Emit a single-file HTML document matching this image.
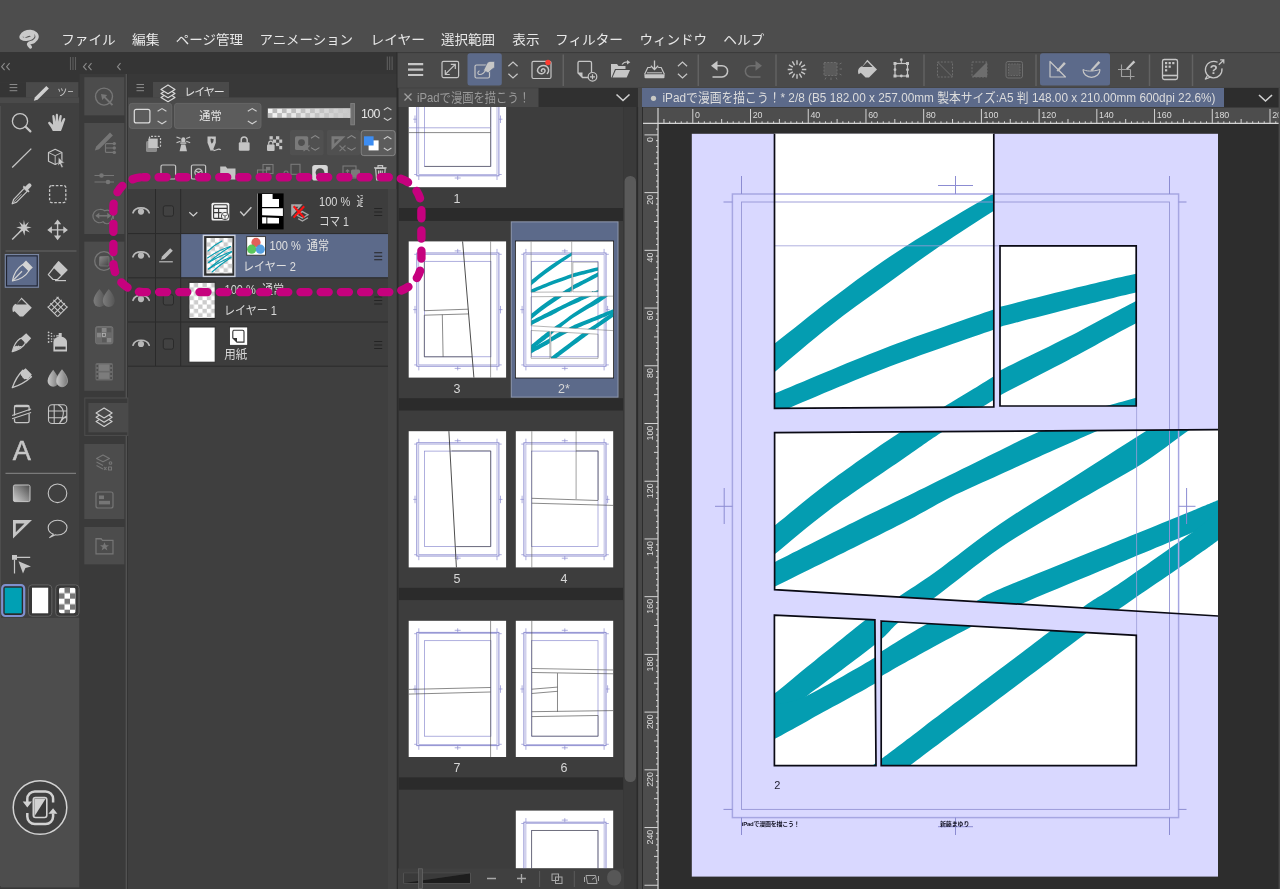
<!DOCTYPE html>
<html lang="ja"><head><meta charset="utf-8"><title>CLIP STUDIO PAINT</title>
<style>html,body{margin:0;padding:0;background:#4d4d4d;overflow:hidden}svg{display:block;will-change:transform}text{font-family:"Liberation Sans","Noto Sans CJK JP",sans-serif}</style>
</head><body>
<svg width="1280" height="889" viewBox="0 0 1280 889">
<rect x="0" y="0" width="1280" height="889" fill="#4d4d4d" />
<rect x="0" y="52" width="397" height="837" fill="#353535" />
<rect x="0" y="74" width="79.5" height="815" fill="#404040" />
<rect x="0" y="74" width="80" height="8.2" fill="#353535" />
<rect x="0" y="82.2" width="26" height="15.2" fill="#353535" />
<rect x="26" y="82.2" width="52.5" height="15.2" fill="#4a4a4a" />
<rect x="78.5" y="82.2" width="1.5" height="15.2" fill="#353535" />
<rect x="0" y="97.4" width="79" height="5.6" fill="#4a4a4a" />
<rect x="0" y="106" width="1" height="780" fill="#4d4d4d" />
<rect x="1" y="618" width="78.5" height="269.6" fill="#4d4d4d" />
<rect x="0" y="887.6" width="79.5" height="1.4" fill="#383838" />
<rect x="79.5" y="74" width="46.5" height="815" fill="#3a3a3a" />
<rect x="125.6" y="74" width="1.6" height="815" fill="#525252" />
<rect x="127.2" y="74" width="1" height="815" fill="#333" />
<rect x="128" y="74" width="268.6" height="815" fill="#3f3f3f" />
<rect x="128" y="74" width="268.6" height="8" fill="#383838" />
<rect x="128" y="82" width="25" height="15.5" fill="#383838" />
<rect x="153" y="82" width="76" height="15.5" fill="#4a4a4a" />
<rect x="229" y="82" width="167.6" height="15.5" fill="#383838" />
<rect x="128" y="97.5" width="268.6" height="91.5" fill="#4a4a4a" />
<rect x="396.6" y="52" width="2" height="837" fill="#2c2c2c" />
<rect x="398.6" y="52" width="241.4" height="837" fill="#4a4a4a" />
<rect x="398.6" y="88" width="241.4" height="801" fill="#2b2b2b" />
<rect x="640" y="88" width="640" height="801" fill="#2d2d2d" />
<rect x="640" y="88" width="640" height="19" fill="#2d2d2d" />
<rect x="638" y="88" width="4" height="801" fill="#484848" />
<rect x="642" y="88" width="582" height="19" fill="#5c6a8a" />
<circle cx="653.5" cy="98.3" r="2.6" fill="#c9c9c4"/>
<text x="662.5" y="102" font-size="12.6" fill="#dcdcdc" text-anchor="start" textLength="553" lengthAdjust="spacingAndGlyphs">iPadで漫画を描こう！* 2/8 (B5 182.00 x 257.00mm 製本サイズ:A5 判 148.00 x 210.00mm 600dpi 22.6%)</text>
<path d="M1259,95 l6.5,6 l6.5,-6" fill="none" stroke="#d0d0d0" stroke-width="1.6"/>
<rect x="642" y="107" width="638" height="782" fill="#2d2d2d" />
<rect x="691.8" y="133.8" width="526.2" height="742.8" fill="#d9d8ff" />
<defs><clipPath id="pageclip"><rect x="691.8" y="133.8" width="526.2" height="742.8"/></clipPath>
<clipPath id="panelclip"><path d="M774.5,120 L993.8,120 L993.8,406.8 L774.5,408.3Z M1000,245.8 L1136.2,245.8 L1136.2,406 L1000,406Z M774.6,432.7 L1240,429.5 L1240,617.3 L774.6,589.6Z M774.4,615.1 L874.9,619.9 L876,765.6 L774.4,765.6Z M881.2,621 L1136.3,635.3 L1136.3,765.6 L881.2,765.6Z"/></clipPath></defs>
<g clip-path="url(#pageclip)">
<path d="M774.5,120 L993.8,120 L993.8,406.8 L774.5,408.3Z" fill="#ffffff"/>
<path d="M1000,245.8 L1136.2,245.8 L1136.2,406 L1000,406Z" fill="#ffffff"/>
<path d="M774.6,432.7 L1240,429.5 L1240,617.3 L774.6,589.6Z" fill="#ffffff"/>
<path d="M774.4,615.1 L874.9,619.9 L876,765.6 L774.4,765.6Z" fill="#ffffff"/>
<path d="M881.2,621 L1136.3,635.3 L1136.3,765.6 L881.2,765.6Z" fill="#ffffff"/>
<g clip-path="url(#panelclip)" fill="#049db1" stroke="none">
<path d="M745.0,366.0 C750.0,362.2 760.8,354.3 775.0,343.3 C789.2,332.3 811.9,313.7 830.0,300.0 C848.1,286.3 865.1,273.5 883.4,261.0 C901.7,248.5 921.6,236.2 940.0,225.0 C958.4,213.8 981.0,200.8 993.5,193.5 C1006.0,186.2 1011.4,183.1 1015.0,181.0 L1015.0,198.0 C1011.4,200.2 1006.0,203.0 993.5,211.0 C981.0,219.0 958.4,233.4 940.0,246.0 C921.6,258.6 901.7,273.3 883.4,286.6 C865.1,299.9 848.1,311.8 830.0,326.0 C811.9,340.2 789.2,359.9 775.0,371.7 C760.8,383.5 750.0,392.8 745.0,397.0Z"/>
<path d="M745.0,405.0 C750.0,403.1 751.9,402.7 775.0,393.3 C798.1,383.9 847.0,362.6 883.4,348.7 C919.8,334.8 974.1,316.6 993.5,309.6 C1012.9,302.6 987.6,310.1 1000.0,306.8 C1012.4,303.5 1045.3,295.2 1068.0,289.7 C1090.7,284.2 1119.8,277.1 1136.0,273.7 C1152.2,270.2 1160.2,269.8 1165.0,269.0 L1165.0,287.0 C1160.2,287.9 1152.2,288.9 1136.0,292.6 C1119.8,296.3 1090.7,303.6 1068.0,309.3 C1045.3,315.0 1012.4,323.5 1000.0,326.9 C987.6,330.3 1012.9,322.8 993.5,329.8 C974.1,336.8 919.8,355.0 883.4,369.0 C847.0,383.0 798.1,404.2 775.0,414.0 C751.9,423.8 750.0,425.7 745.0,428.0Z"/>
<path d="M750.0,545.0 C754.2,541.7 761.7,535.9 775.0,525.3 C788.3,514.7 809.2,496.8 830.0,481.3 C850.8,465.8 881.1,444.6 899.7,432.4 C918.3,420.2 925.8,417.6 941.4,408.3 C957.0,399.0 983.7,382.8 993.5,376.5 C1003.3,370.2 987.6,377.2 1000.0,370.6 C1012.4,364.0 1045.3,348.7 1068.0,337.1 C1090.7,325.5 1119.8,309.1 1136.0,300.9 C1152.2,292.7 1160.2,290.1 1165.0,288.0 L1165.0,310.0 C1160.2,312.2 1152.2,314.9 1136.0,323.3 C1119.8,331.7 1090.7,348.2 1068.0,360.2 C1045.3,372.2 1012.4,388.8 1000.0,395.4 C987.6,402.0 1003.3,393.8 993.5,400.0 C983.7,406.2 957.0,422.2 941.4,432.4 C925.8,442.6 918.3,448.4 899.7,461.2 C881.1,474.0 850.8,493.9 830.0,509.4 C809.2,524.9 788.3,543.1 775.0,554.0 C761.7,564.9 754.2,571.5 750.0,575.0Z"/>
<path d="M750.0,574.0 C754.2,572.0 757.0,570.9 775.0,561.9 C793.0,552.9 835.8,531.1 858.1,520.0 C880.4,508.9 893.4,503.0 908.7,495.5 C924.0,488.0 934.8,482.6 950.0,475.1 C965.2,467.6 985.0,457.8 1000.0,450.5 C1015.0,443.2 1023.7,438.5 1039.7,431.6 C1055.7,424.7 1084.3,413.4 1096.0,409.0 C1107.7,404.6 1103.3,406.9 1110.0,405.0 C1116.7,403.1 1126.8,400.4 1136.0,397.7 C1145.2,395.0 1160.2,390.4 1165.0,389.0 L1165.0,403.0 C1160.2,405.1 1145.2,411.7 1136.0,415.5 C1126.8,419.3 1116.7,423.3 1110.0,426.0 C1103.3,428.7 1107.7,426.5 1096.0,431.6 C1084.3,436.7 1055.7,449.4 1039.7,456.5 C1023.7,463.6 1015.0,467.7 1000.0,474.5 C985.0,481.3 965.2,489.9 950.0,497.5 C934.8,505.1 924.0,512.0 908.7,520.0 C893.4,528.0 880.4,534.4 858.1,545.5 C835.8,556.6 793.0,577.7 775.0,586.6 C757.0,595.5 754.2,596.9 750.0,599.0Z"/>
<path d="M750.0,708.0 C754.1,705.6 764.8,700.4 774.4,693.5 C784.0,686.6 790.7,680.0 807.5,666.5 C824.3,653.0 859.6,624.1 875.0,612.4 C890.4,600.6 889.6,602.7 899.7,596.0 C909.8,589.3 918.7,584.0 935.4,572.0 C952.1,560.0 977.4,539.5 1000.0,524.0 C1022.6,508.5 1047.3,494.1 1070.9,479.0 C1094.5,463.9 1122.7,445.5 1141.7,433.7 C1160.7,421.9 1174.5,414.3 1185.0,408.0 C1195.5,401.7 1201.7,398.0 1205.0,396.0 L1205.0,421.0 C1201.7,423.0 1195.5,425.8 1185.0,433.0 C1174.5,440.2 1160.7,452.0 1141.7,464.0 C1122.7,476.0 1094.5,491.0 1070.9,505.0 C1047.3,519.0 1022.6,532.7 1000.0,548.0 C977.4,563.3 952.1,584.8 935.4,597.0 C918.7,609.2 909.8,613.6 899.7,621.5 C889.6,629.4 890.4,632.3 875.0,644.6 C859.6,656.9 824.3,683.2 807.5,695.4 C790.7,707.6 784.0,711.4 774.4,718.0 C764.8,724.6 754.1,732.2 750.0,735.0Z"/>
<path d="M750.0,712.0 C754.1,710.8 764.8,707.8 774.4,705.0 C784.0,702.2 790.7,703.3 807.5,695.4 C824.3,687.5 862.7,664.9 875.0,657.6 C887.3,650.3 872.4,657.4 881.2,651.7 C890.0,646.0 912.7,631.6 928.0,623.5 C943.3,615.4 960.9,608.8 972.9,603.0 C984.9,597.2 978.8,598.1 1000.0,589.0 C1021.2,579.9 1068.1,561.3 1100.0,548.3 C1131.9,535.3 1171.8,519.2 1191.4,511.2 C1211.0,503.2 1208.9,504.0 1217.8,500.3 C1226.7,496.6 1240.5,490.9 1245.0,489.0 L1245.0,511.0 C1240.5,512.8 1226.7,518.3 1217.8,522.0 C1208.9,525.7 1211.0,524.8 1191.4,533.0 C1171.8,541.2 1131.9,557.8 1100.0,571.1 C1068.1,584.4 1021.2,603.9 1000.0,613.0 C978.8,622.1 984.9,619.8 972.9,626.0 C960.9,632.2 943.3,641.6 928.0,650.0 C912.7,658.4 890.0,670.9 881.2,676.5 C872.4,682.1 887.3,676.2 875.0,683.6 C862.7,691.0 824.3,711.6 807.5,720.9 C790.7,730.1 784.0,733.9 774.4,739.1 C764.8,744.3 754.1,749.9 750.0,752.0Z"/>
<path d="M860.0,775.0 C863.5,772.4 871.2,766.6 881.2,759.1 C891.2,751.6 900.2,744.7 920.0,729.7 C939.8,714.7 978.0,685.7 1000.0,669.1 C1022.0,652.5 1037.4,640.6 1051.7,629.9 C1066.0,619.2 1074.5,612.9 1086.0,605.0 C1097.5,597.1 1102.9,594.8 1120.5,582.8 C1138.1,570.8 1175.2,544.8 1191.4,533.0 C1207.6,521.2 1208.9,518.8 1217.8,512.0 C1226.7,505.2 1240.5,495.3 1245.0,492.0 L1245.0,520.0 C1240.5,523.4 1226.7,533.9 1217.8,540.5 C1208.9,547.1 1207.6,548.1 1191.4,559.4 C1175.2,570.6 1138.1,595.6 1120.5,608.0 C1102.9,620.4 1097.5,625.0 1086.0,633.5 C1074.5,642.0 1066.0,648.5 1051.7,659.2 C1037.4,670.0 1022.0,681.5 1000.0,698.0 C978.0,714.5 939.8,743.1 920.0,758.0 C900.2,772.9 891.2,779.6 881.2,787.1 C871.2,794.6 863.5,800.4 860.0,803.0Z"/>
</g>
<g fill="none" stroke="#8c8cd2" stroke-width="1">
<path d="M774.5,245.8 H1136.6 V766 " stroke-width="0.8" stroke="#9c9cd8"/>
<rect x="741.5" y="202" width="428" height="607.4" stroke="#9696d6" stroke-width="0.9"/>
<rect x="732.4" y="194" width="446.2" height="623.6" stroke-width="1.5" stroke="#a6a6e2"/>
<path d="M741.5,176 V194 M723.5,202 H732.4 M1169.5,176 V194 M1178.6,202 H1186.5 M741.5,817.6 V835 M723.5,809.4 H732.4 M1169.5,817.6 V835 M1178.6,809.4 H1186.5"/>
<path d="M955.5,176 V194 M938,185.5 H973 M955.5,817.6 V835 M938,826.7 H973 M724.2,488 V524 M715,506.3 H732.4 M1186.6,488 V524 M1178.6,506.3 H1195.5"/>
</g>
<g fill="none" stroke="#0a0a14" stroke-width="1.7" stroke-linejoin="miter">
<path d="M774.5,120 L993.8,120 L993.8,406.8 L774.5,408.3Z"/>
<path d="M1000,245.8 L1136.2,245.8 L1136.2,406 L1000,406Z"/>
<path d="M774.6,432.7 L1240,429.5 L1240,617.3 L774.6,589.6Z"/>
<path d="M774.4,615.1 L874.9,619.9 L876,765.6 L774.4,765.6Z"/>
<path d="M881.2,621 L1136.3,635.3 L1136.3,765.6 L881.2,765.6Z"/>
</g>
<text x="774.3" y="789.3" font-size="11" fill="#222233" text-anchor="start" >2</text>
<text x="741.8" y="825.7" font-size="6" fill="#111122" text-anchor="start" font-weight="bold" textLength="58">iPadで漫画を描こう！</text>
<text x="940" y="825.7" font-size="6" fill="#111122" text-anchor="start" font-weight="bold" textLength="29.5">新藤まゆり</text>
</g>
<rect x="643" y="107.5" width="637" height="16.5" fill="#4d4d4d" />
<rect x="643" y="107.5" width="15.5" height="781.5" fill="#4d4d4d" />
<path d="M663.94,119V123.5M669.71,121.3V123.5M675.48,121.3V123.5M681.26,121.3V123.5M687.03,121.3V123.5M692.80,109V123.5M698.57,121.3V123.5M704.34,121.3V123.5M710.12,121.3V123.5M715.89,121.3V123.5M721.66,119V123.5M727.43,121.3V123.5M733.20,121.3V123.5M738.98,121.3V123.5M744.75,121.3V123.5M750.52,109V123.5M756.29,121.3V123.5M762.06,121.3V123.5M767.84,121.3V123.5M773.61,121.3V123.5M779.38,119V123.5M785.15,121.3V123.5M790.92,121.3V123.5M796.70,121.3V123.5M802.47,121.3V123.5M808.24,109V123.5M814.01,121.3V123.5M819.78,121.3V123.5M825.56,121.3V123.5M831.33,121.3V123.5M837.10,119V123.5M842.87,121.3V123.5M848.64,121.3V123.5M854.42,121.3V123.5M860.19,121.3V123.5M865.96,109V123.5M871.73,121.3V123.5M877.50,121.3V123.5M883.28,121.3V123.5M889.05,121.3V123.5M894.82,119V123.5M900.59,121.3V123.5M906.36,121.3V123.5M912.14,121.3V123.5M917.91,121.3V123.5M923.68,109V123.5M929.45,121.3V123.5M935.22,121.3V123.5M941.00,121.3V123.5M946.77,121.3V123.5M952.54,119V123.5M958.31,121.3V123.5M964.08,121.3V123.5M969.86,121.3V123.5M975.63,121.3V123.5M981.40,109V123.5M987.17,121.3V123.5M992.94,121.3V123.5M998.72,121.3V123.5M1004.49,121.3V123.5M1010.26,119V123.5M1016.03,121.3V123.5M1021.80,121.3V123.5M1027.58,121.3V123.5M1033.35,121.3V123.5M1039.12,109V123.5M1044.89,121.3V123.5M1050.66,121.3V123.5M1056.44,121.3V123.5M1062.21,121.3V123.5M1067.98,119V123.5M1073.75,121.3V123.5M1079.52,121.3V123.5M1085.30,121.3V123.5M1091.07,121.3V123.5M1096.84,109V123.5M1102.61,121.3V123.5M1108.38,121.3V123.5M1114.16,121.3V123.5M1119.93,121.3V123.5M1125.70,119V123.5M1131.47,121.3V123.5M1137.24,121.3V123.5M1143.02,121.3V123.5M1148.79,121.3V123.5M1154.56,109V123.5M1160.33,121.3V123.5M1166.10,121.3V123.5M1171.88,121.3V123.5M1177.65,121.3V123.5M1183.42,119V123.5M1189.19,121.3V123.5M1194.96,121.3V123.5M1200.74,121.3V123.5M1206.51,121.3V123.5M1212.28,109V123.5M1218.05,121.3V123.5M1223.82,121.3V123.5M1229.60,121.3V123.5M1235.37,121.3V123.5M1241.14,119V123.5M1246.91,121.3V123.5M1252.68,121.3V123.5M1258.46,121.3V123.5M1264.23,121.3V123.5M1270.00,109V123.5M1275.77,121.3V123.5" stroke="#d4d4d4" stroke-width="1" fill="none"/>
<line x1="643" y1="123.3" x2="1280" y2="123.3" stroke="#d4d4d4" stroke-width="1.2" />
<line x1="658" y1="108" x2="658" y2="889" stroke="#d4d4d4" stroke-width="1.2" />
<text x="695.0" y="118" font-size="8.9" fill="#dadada" text-anchor="start" >0</text>
<text x="752.7" y="118" font-size="8.9" fill="#dadada" text-anchor="start" >20</text>
<text x="810.4" y="118" font-size="8.9" fill="#dadada" text-anchor="start" >40</text>
<text x="868.2" y="118" font-size="8.9" fill="#dadada" text-anchor="start" >60</text>
<text x="925.9" y="118" font-size="8.9" fill="#dadada" text-anchor="start" >80</text>
<text x="983.6" y="118" font-size="8.9" fill="#dadada" text-anchor="start" >100</text>
<text x="1041.3" y="118" font-size="8.9" fill="#dadada" text-anchor="start" >120</text>
<text x="1099.0" y="118" font-size="8.9" fill="#dadada" text-anchor="start" >140</text>
<text x="1156.8" y="118" font-size="8.9" fill="#dadada" text-anchor="start" >160</text>
<text x="1214.5" y="118" font-size="8.9" fill="#dadada" text-anchor="start" >180</text>
<text x="1272.2" y="118" font-size="8.9" fill="#dadada" text-anchor="start" >200</text>
<path d="M656,129.13H658M644.5,134.90H658M656,140.67H658M656,146.44H658M656,152.22H658M656,157.99H658M654,163.76H658M656,169.53H658M656,175.30H658M656,181.08H658M656,186.85H658M644.5,192.62H658M656,198.39H658M656,204.16H658M656,209.94H658M656,215.71H658M654,221.48H658M656,227.25H658M656,233.02H658M656,238.80H658M656,244.57H658M644.5,250.34H658M656,256.11H658M656,261.88H658M656,267.66H658M656,273.43H658M654,279.20H658M656,284.97H658M656,290.74H658M656,296.52H658M656,302.29H658M644.5,308.06H658M656,313.83H658M656,319.60H658M656,325.38H658M656,331.15H658M654,336.92H658M656,342.69H658M656,348.46H658M656,354.24H658M656,360.01H658M644.5,365.78H658M656,371.55H658M656,377.32H658M656,383.10H658M656,388.87H658M654,394.64H658M656,400.41H658M656,406.18H658M656,411.96H658M656,417.73H658M644.5,423.50H658M656,429.27H658M656,435.04H658M656,440.82H658M656,446.59H658M654,452.36H658M656,458.13H658M656,463.90H658M656,469.68H658M656,475.45H658M644.5,481.22H658M656,486.99H658M656,492.76H658M656,498.54H658M656,504.31H658M654,510.08H658M656,515.85H658M656,521.62H658M656,527.40H658M656,533.17H658M644.5,538.94H658M656,544.71H658M656,550.48H658M656,556.26H658M656,562.03H658M654,567.80H658M656,573.57H658M656,579.34H658M656,585.12H658M656,590.89H658M644.5,596.66H658M656,602.43H658M656,608.20H658M656,613.98H658M656,619.75H658M654,625.52H658M656,631.29H658M656,637.06H658M656,642.84H658M656,648.61H658M644.5,654.38H658M656,660.15H658M656,665.92H658M656,671.70H658M656,677.47H658M654,683.24H658M656,689.01H658M656,694.78H658M656,700.56H658M656,706.33H658M644.5,712.10H658M656,717.87H658M656,723.64H658M656,729.42H658M656,735.19H658M654,740.96H658M656,746.73H658M656,752.50H658M656,758.28H658M656,764.05H658M644.5,769.82H658M656,775.59H658M656,781.36H658M656,787.14H658M656,792.91H658M654,798.68H658M656,804.45H658M656,810.22H658M656,816.00H658M656,821.77H658M644.5,827.54H658M656,833.31H658M656,839.08H658M656,844.86H658M656,850.63H658M654,856.40H658M656,862.17H658M656,867.94H658M656,873.72H658M656,879.49H658M644.5,885.26H658" stroke="#d4d4d4" stroke-width="1" fill="none"/>
<text transform="translate(653.2,137.1) rotate(-90)" font-size="8.9" fill="#dadada" text-anchor="end">0</text>
<text transform="translate(653.2,194.8) rotate(-90)" font-size="8.9" fill="#dadada" text-anchor="end">20</text>
<text transform="translate(653.2,252.5) rotate(-90)" font-size="8.9" fill="#dadada" text-anchor="end">40</text>
<text transform="translate(653.2,310.3) rotate(-90)" font-size="8.9" fill="#dadada" text-anchor="end">60</text>
<text transform="translate(653.2,368.0) rotate(-90)" font-size="8.9" fill="#dadada" text-anchor="end">80</text>
<text transform="translate(653.2,425.7) rotate(-90)" font-size="8.9" fill="#dadada" text-anchor="end">100</text>
<text transform="translate(653.2,483.4) rotate(-90)" font-size="8.9" fill="#dadada" text-anchor="end">120</text>
<text transform="translate(653.2,541.1) rotate(-90)" font-size="8.9" fill="#dadada" text-anchor="end">140</text>
<text transform="translate(653.2,598.9) rotate(-90)" font-size="8.9" fill="#dadada" text-anchor="end">160</text>
<text transform="translate(653.2,656.6) rotate(-90)" font-size="8.9" fill="#dadada" text-anchor="end">180</text>
<text transform="translate(653.2,714.3) rotate(-90)" font-size="8.9" fill="#dadada" text-anchor="end">200</text>
<text transform="translate(653.2,772.0) rotate(-90)" font-size="8.9" fill="#dadada" text-anchor="end">220</text>
<text transform="translate(653.2,829.7) rotate(-90)" font-size="8.9" fill="#dadada" text-anchor="end">240</text>
<rect x="1278.6" y="88" width="1.4" height="801" fill="#484848" />
<rect x="398.6" y="87.8" width="239.4" height="19.2" fill="#303030" />
<line x1="398.6" y1="87.5" x2="1280" y2="87.5" stroke="#363636" stroke-width="1.2" />
<rect x="398.6" y="88.1" width="139.9" height="18.9" fill="#4a4a4a" />
<path d="M404.5,93.5 l7,7 M411.5,93.5 l-7,7" stroke="#a0a0a0" stroke-width="1.3" fill="none"/>
<text x="417" y="102" font-size="12.6" fill="#9a9a9a" text-anchor="start" textLength="113" lengthAdjust="spacingAndGlyphs">iPadで漫画を描こう！</text>
<path d="M616.5,94.5 l6.5,6 l6.5,-6" fill="none" stroke="#d0d0d0" stroke-width="1.6"/>
<rect x="398.6" y="107" width="239.4" height="782" fill="#2b2b2b" />
<rect x="398.8" y="107" width="224.4" height="101" fill="#3d3d3d" />
<rect x="398.8" y="220.9" width="224.4" height="177.3" fill="#3d3d3d" />
<rect x="398.8" y="410.5" width="224.4" height="177.3" fill="#3d3d3d" />
<rect x="398.8" y="600.1" width="224.4" height="177.3" fill="#3d3d3d" />
<rect x="398.8" y="789.6999999999999" width="224.4" height="177.3" fill="#3d3d3d" />
<rect x="623.2" y="107" width="15" height="782" fill="#3a3a3a" />
<rect x="624.600" y="176" width="11.400" height="606" rx="5.500" fill="#5a5a5a"/>
<rect x="636.5" y="107" width="1.5" height="782" fill="#2b2b2b" />
<defs><clipPath id="pmclip"><rect x="398" y="107" width="226" height="761.4"/></clipPath></defs>
<g clip-path="url(#pmclip)">
<rect x="408.7" y="51" width="97.4" height="136.2" fill="#ffffff" />
<g transform="translate(408.7,51)" fill="none" stroke="#8d8dd0" stroke-width="0.7">
<rect x="8.1" y="11.6" width="82.1" height="113.2" stroke-width="1"/>
<rect x="10.1" y="12.9" width="78.2" height="110.6" stroke-width="0.6"/>
<rect x="15.8" y="19.9" width="66.4" height="95.5" stroke-width="0.7"/>
<path d="M10.1,7.5V11.6 M88.3,7.5V11.6 M10.1,124.8V129 M88.3,124.8V129 M5.5,12.9H8.1 M90.2,12.9H93 M5.5,123.5H8.1 M90.2,123.5H93 M49,7.5V11.6 M46,9.5H52 M49,124.8V129 M46,127H52 M6.3,64.5V72 M4.5,68.2H8.1 M91.8,64.5V72 M90.2,68.2H93.8"/>
</g>
<g transform="translate(408.7,51)" fill="none" stroke="#222" stroke-width="0.7">
<path d="M0,81.6H81.9 M81.9,0V115.4 M15.8,115.4H81.9" stroke-width="0.65" stroke="#4a4a4a"/>
<path d="M0,76.8H81.9" stroke="#8d8dd0"/>
</g>
<rect x="408.7" y="241.4" width="97.4" height="136.2" fill="#ffffff" />
<g transform="translate(408.7,241.4)" fill="none" stroke="#8d8dd0" stroke-width="0.7">
<rect x="8.1" y="11.6" width="82.1" height="113.2" stroke-width="1"/>
<rect x="10.1" y="12.9" width="78.2" height="110.6" stroke-width="0.6"/>
<rect x="15.8" y="19.9" width="66.4" height="95.5" stroke-width="0.7"/>
<path d="M10.1,7.5V11.6 M88.3,7.5V11.6 M10.1,124.8V129 M88.3,124.8V129 M5.5,12.9H8.1 M90.2,12.9H93 M5.5,123.5H8.1 M90.2,123.5H93 M49,7.5V11.6 M46,9.5H52 M49,124.8V129 M46,127H52 M6.3,64.5V72 M4.5,68.2H8.1 M91.8,64.5V72 M90.2,68.2H93.8"/>
</g>
<g transform="translate(408.7,241.4)" fill="none" stroke="#222" stroke-width="0.7">
<path d="M81.9,0V136.2" stroke-width="0.55" stroke="#555"/>
<path d="M53.9,0L65.2,136.2" stroke-width="0.9" stroke="#3a3a3a"/>
<path d="M15.6,20.1V69.3L59.4,67.8 M15.6,73.8L60.3,72.5 M15.6,73.8V115.4H63.3 M33.6,73.3L34.4,115.4" stroke-width="0.65" stroke="#4a4a4a"/>
</g>
<rect x="511.3" y="221.9" width="106.7" height="175.2" fill="#5c6a8a" stroke="#8d97ad" stroke-width="1"/>
<rect x="515.0" y="240.6" width="99.0" height="137.79999999999998" fill="#111" />
<rect x="515.8" y="241.4" width="97.4" height="136.2" fill="#ffffff" />
<g transform="translate(515.8,241.4)" fill="none" stroke="#8d8dd0" stroke-width="0.7">
<rect x="8.1" y="11.6" width="82.1" height="113.2" stroke-width="1"/>
<rect x="10.1" y="12.9" width="78.2" height="110.6" stroke-width="0.6"/>
<rect x="15.8" y="19.9" width="66.4" height="95.5" stroke-width="0.7"/>
<path d="M10.1,7.5V11.6 M88.3,7.5V11.6 M10.1,124.8V129 M88.3,124.8V129 M5.5,12.9H8.1 M90.2,12.9H93 M5.5,123.5H8.1 M90.2,123.5H93 M49,7.5V11.6 M46,9.5H52 M49,124.8V129 M46,127H52 M6.3,64.5V72 M4.5,68.2H8.1 M91.8,64.5V72 M90.2,68.2H93.8"/>
</g>
<g transform="translate(515.8,241.4) scale(0.18510) translate(-691.8,-133.8)" clip-path="url(#pageclip)">
<g clip-path="url(#panelclip)" fill="#049db1" stroke="none">
<path d="M745.0,366.0 C750.0,362.2 760.8,354.3 775.0,343.3 C789.2,332.3 811.9,313.7 830.0,300.0 C848.1,286.3 865.1,273.5 883.4,261.0 C901.7,248.5 921.6,236.2 940.0,225.0 C958.4,213.8 981.0,200.8 993.5,193.5 C1006.0,186.2 1011.4,183.1 1015.0,181.0 L1015.0,198.0 C1011.4,200.2 1006.0,203.0 993.5,211.0 C981.0,219.0 958.4,233.4 940.0,246.0 C921.6,258.6 901.7,273.3 883.4,286.6 C865.1,299.9 848.1,311.8 830.0,326.0 C811.9,340.2 789.2,359.9 775.0,371.7 C760.8,383.5 750.0,392.8 745.0,397.0Z"/>
<path d="M745.0,405.0 C750.0,403.1 751.9,402.7 775.0,393.3 C798.1,383.9 847.0,362.6 883.4,348.7 C919.8,334.8 974.1,316.6 993.5,309.6 C1012.9,302.6 987.6,310.1 1000.0,306.8 C1012.4,303.5 1045.3,295.2 1068.0,289.7 C1090.7,284.2 1119.8,277.1 1136.0,273.7 C1152.2,270.2 1160.2,269.8 1165.0,269.0 L1165.0,287.0 C1160.2,287.9 1152.2,288.9 1136.0,292.6 C1119.8,296.3 1090.7,303.6 1068.0,309.3 C1045.3,315.0 1012.4,323.5 1000.0,326.9 C987.6,330.3 1012.9,322.8 993.5,329.8 C974.1,336.8 919.8,355.0 883.4,369.0 C847.0,383.0 798.1,404.2 775.0,414.0 C751.9,423.8 750.0,425.7 745.0,428.0Z"/>
<path d="M750.0,545.0 C754.2,541.7 761.7,535.9 775.0,525.3 C788.3,514.7 809.2,496.8 830.0,481.3 C850.8,465.8 881.1,444.6 899.7,432.4 C918.3,420.2 925.8,417.6 941.4,408.3 C957.0,399.0 983.7,382.8 993.5,376.5 C1003.3,370.2 987.6,377.2 1000.0,370.6 C1012.4,364.0 1045.3,348.7 1068.0,337.1 C1090.7,325.5 1119.8,309.1 1136.0,300.9 C1152.2,292.7 1160.2,290.1 1165.0,288.0 L1165.0,310.0 C1160.2,312.2 1152.2,314.9 1136.0,323.3 C1119.8,331.7 1090.7,348.2 1068.0,360.2 C1045.3,372.2 1012.4,388.8 1000.0,395.4 C987.6,402.0 1003.3,393.8 993.5,400.0 C983.7,406.2 957.0,422.2 941.4,432.4 C925.8,442.6 918.3,448.4 899.7,461.2 C881.1,474.0 850.8,493.9 830.0,509.4 C809.2,524.9 788.3,543.1 775.0,554.0 C761.7,564.9 754.2,571.5 750.0,575.0Z"/>
<path d="M750.0,574.0 C754.2,572.0 757.0,570.9 775.0,561.9 C793.0,552.9 835.8,531.1 858.1,520.0 C880.4,508.9 893.4,503.0 908.7,495.5 C924.0,488.0 934.8,482.6 950.0,475.1 C965.2,467.6 985.0,457.8 1000.0,450.5 C1015.0,443.2 1023.7,438.5 1039.7,431.6 C1055.7,424.7 1084.3,413.4 1096.0,409.0 C1107.7,404.6 1103.3,406.9 1110.0,405.0 C1116.7,403.1 1126.8,400.4 1136.0,397.7 C1145.2,395.0 1160.2,390.4 1165.0,389.0 L1165.0,403.0 C1160.2,405.1 1145.2,411.7 1136.0,415.5 C1126.8,419.3 1116.7,423.3 1110.0,426.0 C1103.3,428.7 1107.7,426.5 1096.0,431.6 C1084.3,436.7 1055.7,449.4 1039.7,456.5 C1023.7,463.6 1015.0,467.7 1000.0,474.5 C985.0,481.3 965.2,489.9 950.0,497.5 C934.8,505.1 924.0,512.0 908.7,520.0 C893.4,528.0 880.4,534.4 858.1,545.5 C835.8,556.6 793.0,577.7 775.0,586.6 C757.0,595.5 754.2,596.9 750.0,599.0Z"/>
<path d="M750.0,708.0 C754.1,705.6 764.8,700.4 774.4,693.5 C784.0,686.6 790.7,680.0 807.5,666.5 C824.3,653.0 859.6,624.1 875.0,612.4 C890.4,600.6 889.6,602.7 899.7,596.0 C909.8,589.3 918.7,584.0 935.4,572.0 C952.1,560.0 977.4,539.5 1000.0,524.0 C1022.6,508.5 1047.3,494.1 1070.9,479.0 C1094.5,463.9 1122.7,445.5 1141.7,433.7 C1160.7,421.9 1174.5,414.3 1185.0,408.0 C1195.5,401.7 1201.7,398.0 1205.0,396.0 L1205.0,421.0 C1201.7,423.0 1195.5,425.8 1185.0,433.0 C1174.5,440.2 1160.7,452.0 1141.7,464.0 C1122.7,476.0 1094.5,491.0 1070.9,505.0 C1047.3,519.0 1022.6,532.7 1000.0,548.0 C977.4,563.3 952.1,584.8 935.4,597.0 C918.7,609.2 909.8,613.6 899.7,621.5 C889.6,629.4 890.4,632.3 875.0,644.6 C859.6,656.9 824.3,683.2 807.5,695.4 C790.7,707.6 784.0,711.4 774.4,718.0 C764.8,724.6 754.1,732.2 750.0,735.0Z"/>
<path d="M750.0,712.0 C754.1,710.8 764.8,707.8 774.4,705.0 C784.0,702.2 790.7,703.3 807.5,695.4 C824.3,687.5 862.7,664.9 875.0,657.6 C887.3,650.3 872.4,657.4 881.2,651.7 C890.0,646.0 912.7,631.6 928.0,623.5 C943.3,615.4 960.9,608.8 972.9,603.0 C984.9,597.2 978.8,598.1 1000.0,589.0 C1021.2,579.9 1068.1,561.3 1100.0,548.3 C1131.9,535.3 1171.8,519.2 1191.4,511.2 C1211.0,503.2 1208.9,504.0 1217.8,500.3 C1226.7,496.6 1240.5,490.9 1245.0,489.0 L1245.0,511.0 C1240.5,512.8 1226.7,518.3 1217.8,522.0 C1208.9,525.7 1211.0,524.8 1191.4,533.0 C1171.8,541.2 1131.9,557.8 1100.0,571.1 C1068.1,584.4 1021.2,603.9 1000.0,613.0 C978.8,622.1 984.9,619.8 972.9,626.0 C960.9,632.2 943.3,641.6 928.0,650.0 C912.7,658.4 890.0,670.9 881.2,676.5 C872.4,682.1 887.3,676.2 875.0,683.6 C862.7,691.0 824.3,711.6 807.5,720.9 C790.7,730.1 784.0,733.9 774.4,739.1 C764.8,744.3 754.1,749.9 750.0,752.0Z"/>
<path d="M860.0,775.0 C863.5,772.4 871.2,766.6 881.2,759.1 C891.2,751.6 900.2,744.7 920.0,729.7 C939.8,714.7 978.0,685.7 1000.0,669.1 C1022.0,652.5 1037.4,640.6 1051.7,629.9 C1066.0,619.2 1074.5,612.9 1086.0,605.0 C1097.5,597.1 1102.9,594.8 1120.5,582.8 C1138.1,570.8 1175.2,544.8 1191.4,533.0 C1207.6,521.2 1208.9,518.8 1217.8,512.0 C1226.7,505.2 1240.5,495.3 1245.0,492.0 L1245.0,520.0 C1240.5,523.4 1226.7,533.9 1217.8,540.5 C1208.9,547.1 1207.6,548.1 1191.4,559.4 C1175.2,570.6 1138.1,595.6 1120.5,608.0 C1102.9,620.4 1097.5,625.0 1086.0,633.5 C1074.5,642.0 1066.0,648.5 1051.7,659.2 C1037.4,670.0 1022.0,681.5 1000.0,698.0 C978.0,714.5 939.8,743.1 920.0,758.0 C900.2,772.9 891.2,779.6 881.2,787.1 C871.2,794.6 863.5,800.4 860.0,803.0Z"/>
</g>
<g fill="none" stroke="#666" stroke-width="2.6">
<path d="M774.5,120 L993.8,120 L993.8,406.8 L774.5,408.3Z"/>
<path d="M1000,245.8 L1136.2,245.8 L1136.2,406 L1000,406Z"/>
<path d="M774.6,432.7 L1240,429.5 L1240,617.3 L774.6,589.6Z"/>
<path d="M774.4,615.1 L874.9,619.9 L876,765.6 L774.4,765.6Z"/>
<path d="M881.2,621 L1136.3,635.3 L1136.3,765.6 L881.2,765.6Z"/>
</g></g>
<rect x="408.7" y="431.2" width="97.4" height="136.2" fill="#ffffff" />
<g transform="translate(408.7,431.2)" fill="none" stroke="#8d8dd0" stroke-width="0.7">
<rect x="8.1" y="11.6" width="82.1" height="113.2" stroke-width="1"/>
<rect x="10.1" y="12.9" width="78.2" height="110.6" stroke-width="0.6"/>
<rect x="15.8" y="19.9" width="66.4" height="95.5" stroke-width="0.7"/>
<path d="M10.1,7.5V11.6 M88.3,7.5V11.6 M10.1,124.8V129 M88.3,124.8V129 M5.5,12.9H8.1 M90.2,12.9H93 M5.5,123.5H8.1 M90.2,123.5H93 M49,7.5V11.6 M46,9.5H52 M49,124.8V129 M46,127H52 M6.3,64.5V72 M4.5,68.2H8.1 M91.8,64.5V72 M90.2,68.2H93.8"/>
</g>
<g transform="translate(408.7,431.2)" fill="none" stroke="#222" stroke-width="0.7">
<path d="M40.2,0L47.7,136.2" stroke-width="0.9" stroke="#3a3a3a"/>
<path d="M42.8,19.7H81.9V115.4H47.5" stroke-width="0.65" stroke="#4a4a4a"/>
</g>
<rect x="515.8" y="431.2" width="97.4" height="136.2" fill="#ffffff" />
<g transform="translate(515.8,431.2)" fill="none" stroke="#8d8dd0" stroke-width="0.7">
<rect x="8.1" y="11.6" width="82.1" height="113.2" stroke-width="1"/>
<rect x="10.1" y="12.9" width="78.2" height="110.6" stroke-width="0.6"/>
<rect x="15.8" y="19.9" width="66.4" height="95.5" stroke-width="0.7"/>
<path d="M10.1,7.5V11.6 M88.3,7.5V11.6 M10.1,124.8V129 M88.3,124.8V129 M5.5,12.9H8.1 M90.2,12.9H93 M5.5,123.5H8.1 M90.2,123.5H93 M49,7.5V11.6 M46,9.5H52 M49,124.8V129 M46,127H52 M6.3,64.5V72 M4.5,68.2H8.1 M91.8,64.5V72 M90.2,68.2H93.8"/>
</g>
<g transform="translate(515.8,431.2)" fill="none" stroke="#222" stroke-width="0.7">
<path d="M16,0V136.2 M60.3,0V67.8" stroke-width="0.55" stroke="#555"/>
<path d="M60.3,19.7H82.3V68.8 M16,67.1L82.3,69.3 M16,72L97.4,74.2" stroke-width="0.65" stroke="#4a4a4a"/>
</g>
<rect x="408.7" y="620.8" width="97.4" height="136.2" fill="#ffffff" />
<g transform="translate(408.7,620.8)" fill="none" stroke="#8d8dd0" stroke-width="0.7">
<rect x="8.1" y="11.6" width="82.1" height="113.2" stroke-width="1"/>
<rect x="10.1" y="12.9" width="78.2" height="110.6" stroke-width="0.6"/>
<rect x="15.8" y="19.9" width="66.4" height="95.5" stroke-width="0.7"/>
<path d="M10.1,7.5V11.6 M88.3,7.5V11.6 M10.1,124.8V129 M88.3,124.8V129 M5.5,12.9H8.1 M90.2,12.9H93 M5.5,123.5H8.1 M90.2,123.5H93 M49,7.5V11.6 M46,9.5H52 M49,124.8V129 M46,127H52 M6.3,64.5V72 M4.5,68.2H8.1 M91.8,64.5V72 M90.2,68.2H93.8"/>
</g>
<g transform="translate(408.7,620.8)" fill="none" stroke="#222" stroke-width="0.7">
<path d="M81.9,0V136.2" stroke-width="0.6" stroke="#4a4a4a"/>
<path d="M0,68.6L81.9,66.7 M0,73.3L81.9,71.2" stroke-width="0.65" stroke="#4a4a4a"/>
</g>
<rect x="515.8" y="620.8" width="97.4" height="136.2" fill="#ffffff" />
<g transform="translate(515.8,620.8)" fill="none" stroke="#8d8dd0" stroke-width="0.7">
<rect x="8.1" y="11.6" width="82.1" height="113.2" stroke-width="1"/>
<rect x="10.1" y="12.9" width="78.2" height="110.6" stroke-width="0.6"/>
<rect x="15.8" y="19.9" width="66.4" height="95.5" stroke-width="0.7"/>
<path d="M10.1,7.5V11.6 M88.3,7.5V11.6 M10.1,124.8V129 M88.3,124.8V129 M5.5,12.9H8.1 M90.2,12.9H93 M5.5,123.5H8.1 M90.2,123.5H93 M49,7.5V11.6 M46,9.5H52 M49,124.8V129 M46,127H52 M6.3,64.5V72 M4.5,68.2H8.1 M91.8,64.5V72 M90.2,68.2H93.8"/>
</g>
<g transform="translate(515.8,620.8)" fill="none" stroke="#222" stroke-width="0.7">
<path d="M16,0V115.4H82.3V94.7" stroke-width="0.6" stroke="#4a4a4a"/>
<path d="M16,47.7L97.4,49.2" stroke-width="0.8" stroke="#777"/>
<path d="M16,51.7L97.4,53 M41.7,52.4V90.9 M16,68.4L41.7,66.3 M16,72.7L41.7,70.5 M16,90.9L97.4,89.8 M16,95.8L82.3,94.7" stroke-width="0.65" stroke="#4a4a4a"/>
</g>
<rect x="515.8" y="810.6" width="97.4" height="136.2" fill="#ffffff" />
<g transform="translate(515.8,810.6)" fill="none" stroke="#8d8dd0" stroke-width="0.7">
<rect x="8.1" y="11.6" width="82.1" height="113.2" stroke-width="1"/>
<rect x="10.1" y="12.9" width="78.2" height="110.6" stroke-width="0.6"/>
<rect x="15.8" y="19.9" width="66.4" height="95.5" stroke-width="0.7"/>
<path d="M10.1,7.5V11.6 M88.3,7.5V11.6 M10.1,124.8V129 M88.3,124.8V129 M5.5,12.9H8.1 M90.2,12.9H93 M5.5,123.5H8.1 M90.2,123.5H93 M49,7.5V11.6 M46,9.5H52 M49,124.8V129 M46,127H52 M6.3,64.5V72 M4.5,68.2H8.1 M91.8,64.5V72 M90.2,68.2H93.8"/>
</g>
<g transform="translate(515.8,810.6)" fill="none" stroke="#222" stroke-width="0.7">
<path d="M15.8,19.9H82.2V115.4H15.8Z" stroke-width="0.7" stroke="#555"/>
</g>
<text x="457" y="203" font-size="12.5" fill="#d6d6d6" text-anchor="middle" >1</text>
<text x="457" y="393" font-size="12.5" fill="#d6d6d6" text-anchor="middle" >3</text>
<text x="564" y="393" font-size="12.5" fill="#d6d6d6" text-anchor="middle" >2*</text>
<text x="457" y="582.6" font-size="12.5" fill="#d6d6d6" text-anchor="middle" >5</text>
<text x="564" y="582.6" font-size="12.5" fill="#d6d6d6" text-anchor="middle" >4</text>
<text x="457" y="772.2" font-size="12.5" fill="#d6d6d6" text-anchor="middle" >7</text>
<text x="564" y="772.2" font-size="12.5" fill="#d6d6d6" text-anchor="middle" >6</text>
</g>
<rect x="398" y="868.4" width="226" height="20.6" fill="#404040" />
<path d="M403.5,883.3V873.2H470.5V883.3Z" fill="#262626" stroke="#5a5a5a" stroke-width="0.8"/>
<path d="M404,883 L470,873.6 V883Z" fill="#1d1d1d"/>
<path d="M404,873.6 H470 L404,883Z" fill="#3a3a3a"/>
<rect x="418.6" y="868.8" width="4" height="19.5" fill="#4a4a4a" stroke="#6a6a6a" stroke-width="0.7"/>
<path d="M487,878.5H496 M517,878.5H526 M521.5,874V883" stroke="#a8a8a8" stroke-width="1.3" fill="none"/>
<line x1="539.6" y1="871" x2="539.6" y2="887" stroke="#5a5a5a" stroke-width="1" />
<line x1="574.3" y1="871" x2="574.3" y2="887" stroke="#5a5a5a" stroke-width="1" />
<g fill="none" stroke="#a8a8a8" stroke-width="1"><rect x="552" y="874" width="6.5" height="6.5"/><rect x="555.5" y="877" width="6.5" height="6.5"/><path d="M586,875.5h9.5l1.5,8h-9.5zM592,879.5l3,-2"/><path d="M584.5,877v5 M598.5,876v5"/></g>
<rect x="607.2" y="870" width="14" height="15.5" rx="6.5" fill="#575757"/>
<path d="M136.5,84.5h7.5M136.5,87.6h7.5M136.5,90.7h7.5" stroke="#8a8a8a" stroke-width="1"/>
<text x="184.2" y="96.3" font-size="11" fill="#e0e0e0" text-anchor="start" textLength="40.5">レイヤー</text>
<rect x="129.3" y="103.4" width="42.4" height="25" rx="2.5" fill="#5c5c5c" stroke="#6a6a6a" stroke-width="0.8"/>
<rect x="134.3" y="109.3" width="15.6" height="13.6" rx="2" fill="none" stroke="#dcdcdc" stroke-width="1.2"/>
<path d="M157.6,111.32799999999999 L162,108.6 L166.4,111.32799999999999 M157.6,121.072 L162,123.8 L166.4,121.072" fill="none" stroke="#cfcfcf" stroke-width="1.1"/>
<rect x="174.5" y="103.4" width="86.5" height="25" rx="2.5" fill="#5c5c5c" stroke="#6a6a6a" stroke-width="0.8"/>
<text x="210.5" y="120.3" font-size="11.2" fill="#e6e6e6" text-anchor="middle" >通常</text>
<path d="M247.79999999999998,111.32799999999999 L252.2,108.6 L256.59999999999997,111.32799999999999 M247.79999999999998,121.072 L252.2,123.8 L256.59999999999997,121.072" fill="none" stroke="#cfcfcf" stroke-width="1.1"/>
<defs><pattern id="chk5" x="267.8" y="108.4" width="9.4" height="9.4" patternUnits="userSpaceOnUse"><rect width="9.4" height="9.4" fill="#f4f4f4"/><rect x="4.7" width="4.7" height="4.7" fill="#b8b8b8"/><rect y="4.7" width="4.7" height="4.7" fill="#b8b8b8"/></pattern><linearGradient id="opg" x1="0" x2="1"><stop offset="0" stop-color="#cfcfcf" stop-opacity="0"/><stop offset="1" stop-color="#c8c8c8" stop-opacity="1"/></linearGradient></defs>
<rect x="267.8" y="108.4" width="83" height="9.4" fill="url(#chk5)" />
<rect x="267.8" y="108.4" width="83" height="9.4" fill="url(#opg)" />
<rect x="350.8" y="103.6" width="3.8" height="21.3" fill="#6e6e6e" stroke="#8a8a8a" stroke-width="0.7"/>
<text x="361" y="117.9" font-size="12.4" fill="#e6e6e6" text-anchor="start" textLength="19.3">100</text>
<path d="M383.8,109.95599999999999 L387.6,107.6 L391.40000000000003,109.95599999999999 M383.8,118.04400000000001 L387.6,120.4 L391.40000000000003,118.04400000000001" fill="none" stroke="#cfcfcf" stroke-width="1.1"/>
<rect x="146" y="141" width="11" height="11" rx="1.5" fill="#8c8c8c"/><rect x="148.3" y="138.6" width="9.4" height="9.4" fill="#c4c4c4"/><rect x="149.5" y="136.3" width="11" height="11" rx="1.5" fill="none" stroke="#c4c4c4" stroke-width="1.2" stroke-dasharray="2 1.4"/>
<g fill="#c4c4c4" stroke="none"><path d="M181.2,144.5h4.2l1.6,6.8h-7.4z"/><path d="M181.3,139.3a2,2 0 0 1 4,0v2.9h-4z"/><rect x="180.3" y="142.4" width="6" height="1.4"/></g><path d="M176.5,137l4,1.6M176.5,142.7l4,-1.4M190.2,137l-4,1.6M190.2,142.7l-4,-1.4" stroke="#c4c4c4" stroke-width="1.1"/>
<path d="M207.5,136.4h8.3v6.3l-2.6,6.8h-3.1l-2.6,-6.8z" fill="#c4c4c4"/><path d="M210.2,149.8h3.5" stroke="#c4c4c4" stroke-width="1.4"/><path d="M213.5,150.5c3,0.4 4.5,-2.8 7.3,-0.6" stroke="#c4c4c4" stroke-width="1.2" fill="none"/><path d="M210.5,139c1,-1.5 2.4,1.2 3.3,-0.3l-0.6,3.4l-1.4,1.6l-1,-2z" fill="#4a4a4a"/>
<rect x="238.8" y="142.2" width="10.8" height="8.6" rx="1.2" fill="#c4c4c4"/><path d="M241.2,142.4v-2.4a3,3 0 0 1 6,0v2.4" stroke="#c4c4c4" stroke-width="1.5" fill="none"/>
<g fill="#c4c4c4"><rect x="269.5" y="136.2" width="3.3" height="3.3"/><rect x="276" y="136.2" width="3.3" height="3.3"/><rect x="272.8" y="139.5" width="3.3" height="3.3"/><rect x="279.2" y="139.5" width="3" height="3.3"/><rect x="276" y="142.8" width="3.3" height="3.3"/><rect x="279.2" y="146" width="3" height="3.3"/><rect x="267" y="144.6" width="7.6" height="6.3" rx="1"/></g><path d="M268.7,144.8v-1.5a2.1,2.1 0 0 1 4.2,0v1.5" stroke="#c4c4c4" stroke-width="1.2" fill="none"/>
<rect x="290" y="130" width="33.5" height="25.2" rx="2" fill="#505050"/>
<rect x="295" y="136.3" width="13.2" height="13.8" rx="1.5" fill="#7a7a7a"/><circle cx="301.5" cy="142.6" r="3.4" fill="#505050"/><path d="M303.5,145.5l6,5.6M309.5,145.5l-6,5.6" stroke="#7a7a7a" stroke-width="1.2"/>
<path d="M311.0,138.204 L315.2,135.6 L319.4,138.204 M311.0,147.59599999999998 L315.2,150.2 L319.4,147.59599999999998" fill="none" stroke="#8a8a8a" stroke-width="1.1"/>
<rect x="326.8" y="130" width="33.3" height="25.2" rx="2" fill="#505050"/>
<path d="M331.5,136.3h14l-14,13.8z" fill="#7a7a7a"/><path d="M334.4,139.2h4.6l-4.6,4.6z" fill="#505050"/><path d="M339.5,145.5l6,5.6M345.5,145.5l-6,5.6" stroke="#7a7a7a" stroke-width="1.2"/>
<path d="M347.3,138.204 L351.5,135.6 L355.7,138.204 M347.3,147.59599999999998 L351.5,150.2 L355.7,147.59599999999998" fill="none" stroke="#8a8a8a" stroke-width="1.1"/>
<rect x="361.2" y="130.6" width="34" height="25" rx="2.5" fill="#5c5c5c" stroke="#8a8a8a" stroke-width="0.9"/>
<rect x="368.6" y="140.4" width="10" height="10" fill="#ffffff" />
<rect x="364" y="136.3" width="9.6" height="9.2" fill="#3d8df2" />
<path d="M383.8,138.956 L387.6,136.6 L391.40000000000003,138.956 M383.8,148.044 L387.6,150.4 L391.40000000000003,148.044" fill="none" stroke="#cfcfcf" stroke-width="1.1"/>
<g fill="none" stroke="#c4c4c4" stroke-width="1.2"><rect x="161" y="165" width="14.6" height="14" rx="1.6"/><rect x="191.4" y="165" width="14.2" height="14" rx="1.6"/><circle cx="198.5" cy="172.5" r="3.6"/><path d="M195.5,170.8l3,1.7l3,-1.7M198.5,172.5v3.4"/></g>
<path d="M220.2,166.5h5.5l1.6,2h8.2v11h-15.3z" fill="#c4c4c4"/>
<g fill="none" stroke="#7a7a7a" stroke-width="1.1"><rect x="263" y="164.5" width="10" height="9"/><rect x="257.5" y="170" width="9" height="9"/><rect x="291" y="164.3" width="9" height="10"/><path d="M284,180v-4l4,-3M286,171a2,2 0 1 0 0.1,0"/><rect x="343" y="166" width="13" height="12"/><path d="M347.5,176v-6M345.8,171.5l1.7,-1.8l1.7,1.8"/></g><rect x="266" y="166.8" width="4.4" height="3.6" fill="#7a7a7a"/><rect x="351" y="169.5" width="9" height="8" rx="1.5" fill="#7a7a7a"/>
<rect x="312.2" y="164.9" width="15.6" height="15.6" rx="2.6" fill="#d6d6d6"/><circle cx="320" cy="172.6" r="4.4" fill="#4a4a4a"/>
<g fill="none" stroke="#c4c4c4" stroke-width="1.2"><path d="M375.6,168.3l1,11.7h7.6l1,-11.7z"/><path d="M374,167.8h12.6M378,167.6v-2h4.6v2M378.6,170.5v7M380.4,170.5v7M382.2,170.5v7"/></g>
<rect x="128" y="189" width="260" height="177.6" fill="#3d3d3d" />
<rect x="388" y="189" width="8.6" height="700" fill="#444444" />
<rect x="181" y="233.6" width="207" height="44" fill="#5c6a8a" />
<line x1="128" y1="233.6" x2="388" y2="233.6" stroke="#2a2a2a" stroke-width="1" />
<line x1="128" y1="277.8" x2="388" y2="277.8" stroke="#2a2a2a" stroke-width="1" />
<line x1="128" y1="322" x2="388" y2="322" stroke="#2a2a2a" stroke-width="1" />
<line x1="128" y1="366.2" x2="388" y2="366.2" stroke="#2a2a2a" stroke-width="1" />
<line x1="155.5" y1="189" x2="155.5" y2="366" stroke="#2a2a2a" stroke-width="1" />
<line x1="180.7" y1="189" x2="180.7" y2="366" stroke="#2a2a2a" stroke-width="1" />
<path d="M133,212.8c2,-6.6 14,-6.6 16.2,0" fill="none" stroke="#b8b8b8" stroke-width="1.7" stroke-linecap="round"/><circle cx="141" cy="211.6" r="3.1" fill="#b8b8b8"/>
<path d="M133,256.8c2,-6.6 14,-6.6 16.2,0" fill="none" stroke="#b8b8b8" stroke-width="1.7" stroke-linecap="round"/><circle cx="141" cy="255.6" r="3.1" fill="#b8b8b8"/>
<path d="M133,300.3c2,-6.6 14,-6.6 16.2,0" fill="none" stroke="#b8b8b8" stroke-width="1.7" stroke-linecap="round"/><circle cx="141" cy="299.1" r="3.1" fill="#b8b8b8"/>
<path d="M133,345.2c2,-6.6 14,-6.6 16.2,0" fill="none" stroke="#b8b8b8" stroke-width="1.7" stroke-linecap="round"/><circle cx="141" cy="344.0" r="3.1" fill="#b8b8b8"/>
<rect x="163.3" y="205.8" width="10.2" height="10.4" rx="2" fill="#424242" stroke="#2a2a2a" stroke-width="1"/>
<rect x="163.3" y="294.6" width="10.2" height="10.4" rx="2" fill="#424242" stroke="#2a2a2a" stroke-width="1"/>
<rect x="163.3" y="338.8" width="10.2" height="10.4" rx="2" fill="#424242" stroke="#2a2a2a" stroke-width="1"/>
<path d="M374.2,208.5h8M374.2,212h8M374.2,215.5h8" stroke="#242424" stroke-width="1.1"/>
<path d="M374.2,252.8h8M374.2,256.3h8M374.2,259.8h8" stroke="#242424" stroke-width="1.1"/>
<path d="M374.2,297.0h8M374.2,300.5h8M374.2,304.0h8" stroke="#242424" stroke-width="1.1"/>
<path d="M374.2,341.5h8M374.2,345h8M374.2,348.5h8" stroke="#242424" stroke-width="1.1"/>
<path d="M189.3,212.3l4,3.6l4,-3.6" fill="none" stroke="#d0d0d0" stroke-width="1.2"/>
<rect x="211.5" y="202.8" width="17.8" height="17.6" rx="1.5" fill="#f2f2f2"/><g fill="none" stroke="#3a3a3a" stroke-width="1.1"><rect x="213.6" y="204.8" width="13.6" height="13.6" rx="1"/><path d="M213.6,208.4h13.6M213.6,212.6h8M218.6,208.4v10"/></g><circle cx="225" cy="216" r="3.7" fill="#f2f2f2" stroke="#3a3a3a" stroke-width="0.9"/><path d="M222.4,214.7l2.6,1.4l2.6,-1.4M225,216.1v2.8" stroke="#3a3a3a" stroke-width="0.8" fill="none"/>
<path d="M240.2,211.6l3.6,3.8l7.6,-8.2" fill="none" stroke="#c8c8c8" stroke-width="1.5"/>
<rect x="256.8" y="193.4" width="26.8" height="36" fill="#000000" />
<line x1="257.4" y1="193.4" x2="257.4" y2="229.4" stroke="#b0b0b0" stroke-width="0.8" />
<path d="M262.1,194h10.5v5h6.4v8h-16.9z M262.1,208.3h20.8v7.8l-20.8,-0.8z M262.1,217.3h4.3v6.2h-4.3z M267.3,217.5l11.7,0.5v5.5h-11.7z" fill="#ffffff"/>
<path d="M291.2,204.3h11.5l-11.5,12.4z" fill="#a8a8a8"/><path d="M295,206.8h3.5l-3.5,3.8z" fill="#3d3d3d"/><path d="M296,214.8l6.4,-3.2l5.6,3.2l-5.6,3.2z M298.2,218.6l4.2,2.4l5.6,-3.2" fill="none" stroke="#a8a8a8" stroke-width="1.3"/>
<path d="M293.6,206.2l10.6,11.4M304.2,206.2l-10.6,11.4" stroke="#ff1010" stroke-width="2" fill="none"/>
<defs><clipPath id="r1clip"><rect x="300" y="190" width="62.8" height="42"/></clipPath></defs>
<text x="319" y="205.9" font-size="12.2" fill="#d8d8d8" text-anchor="start" clip-path="url(#r1clip)" textLength="59.5" lengthAdjust="spacingAndGlyphs">100 %  通常</text>
<text x="319" y="225.9" font-size="12.2" fill="#d8d8d8" text-anchor="start" textLength="30" lengthAdjust="spacingAndGlyphs">コマ 1</text>
<path d="M159.2,261.8h13.6" stroke="#bcbcbc" stroke-width="1.2"/><path d="M161,259.8l1,-3.4l8.2,-8.2l2.6,2.6l-8.2,8.2z" fill="#bcbcbc"/>
<defs><pattern id="chk4" x="206.4" y="238" width="8.6" height="8.6" patternUnits="userSpaceOnUse"><rect width="8.6" height="8.6" fill="#ffffff"/><rect x="4.3" width="4.3" height="4.3" fill="#cccccc"/><rect y="4.3" width="4.3" height="4.3" fill="#cccccc"/></pattern><pattern id="chk4b" x="189.6" y="283" width="8.6" height="8.6" patternUnits="userSpaceOnUse"><rect width="8.6" height="8.6" fill="#ffffff"/><rect x="4.3" width="4.3" height="4.3" fill="#cccccc"/><rect y="4.3" width="4.3" height="4.3" fill="#cccccc"/></pattern></defs>
<rect x="203.400" y="235.400" width="31.500" height="41" fill="#2e2e2e" stroke="#ccd2e0" stroke-width="1.400"/>
<rect x="206.4" y="238" width="26" height="35.4" fill="url(#chk4)" />
<g fill="none" stroke="#049db1" stroke-width="1.1" stroke-linecap="round"><path d="M208,251c5,-5 10,-8 14,-10"/><path d="M207.5,258c7,-5 14,-9 23,-11.5"/><path d="M230.5,246.5c-8,5 -15,10 -22,16"/><path d="M208.5,262.5c7,-4 14,-8 23,-11"/><path d="M231.5,252c-8,5 -16,11 -23,17"/><path d="M208.5,269c4,-2.500 13,-8 22.500,-12"/><path d="M231,257.500c-7,4.500 -13,9 -19,14.500"/></g>
<rect x="246.7" y="236.6" width="18.8" height="18.6" fill="#ffffff" stroke="#333" stroke-width="0.9"/><circle cx="256" cy="242.400" r="4.600" fill="#e0524c" opacity="0.92"/><circle cx="251.700" cy="249.200" r="4.600" fill="#4cc24e" opacity="0.92"/><circle cx="260.300" cy="249.200" r="4.600" fill="#4797de" opacity="0.92"/>
<text x="269.5" y="249.8" font-size="12.2" fill="#e0e0e0" text-anchor="start" textLength="59.5" lengthAdjust="spacingAndGlyphs">100 %  通常</text>
<text x="243" y="270.8" font-size="12.2" fill="#e0e0e0" text-anchor="start" textLength="53" lengthAdjust="spacingAndGlyphs">レイヤー 2</text>
<rect x="188.9" y="282.3" width="26.3" height="36.2" fill="url(#chk4b)" stroke="#2a2a2a" stroke-width="1"/>
<text x="224.6" y="293.6" font-size="12.2" fill="#d8d8d8" text-anchor="start" textLength="59.5" lengthAdjust="spacingAndGlyphs">100 %  通常</text>
<text x="224" y="314.8" font-size="12.2" fill="#d8d8d8" text-anchor="start" textLength="53" lengthAdjust="spacingAndGlyphs">レイヤー 1</text>
<rect x="188.9" y="327" width="26.3" height="35.2" fill="#ffffff" stroke="#2a2a2a" stroke-width="1"/>
<rect x="229.5" y="327" width="18.2" height="18.3" fill="#ffffff" stroke="#2a2a2a" stroke-width="0.8"/><path d="M233.3,330.3h9.200a1.500,1.500 0 0 1 1.500,1.500v10.300h-7l-4.200,-4.200v-6.100a1.500,1.500 0 0 1 1.500,-1.500z" fill="#fff" stroke="#333" stroke-width="1.1"/><path d="M232.800,338l4.200,4.200v-4.200z" fill="#333"/>
<text x="224.3" y="359" font-size="12.2" fill="#d8d8d8" text-anchor="start" textLength="23" lengthAdjust="spacingAndGlyphs">用紙</text>
<path d="M4.6,63.2l-3,3.500l3,3.500M9.600,63.200l-3,3.500l3,3.500" fill="none" stroke="#8a8a8a" stroke-width="1.1"/>
<path d="M70.5,57v13M73,57v13M75.500,57v13" stroke="#5e5e5e" stroke-width="1.1"/>
<path d="M86.500,63.200l-3,3.500l3,3.500M91.500,63.200l-3,3.500l3,3.500M120.500,63.200l-3,3.500l3,3.500" fill="none" stroke="#8a8a8a" stroke-width="1.1"/>
<path d="M387.300,56.500v13.500M389.700,56.500v13.500M392.100,56.500v13.500" stroke="#5e5e5e" stroke-width="1.100"/>
<path d="M9.600,84.500h7.700M9.600,87.600h7.700M9.600,90.700h7.700" stroke="#8a8a8a" stroke-width="1"/>
<path d="M33.800,100.800l1.200,-3.600l11.300,-11.300l2.600,2.600l-11.300,11.300z" fill="#d0d0d0"/>
<defs><clipPath id="tabclip"><rect x="26" y="80" width="47" height="24"/></clipPath></defs>
<text x="57.3" y="96.4" font-size="10" fill="#c8c8c8" text-anchor="start" clip-path="url(#tabclip)">ツール</text>
<line x1="5.5" y1="251" x2="76.5" y2="251" stroke="#666" stroke-width="1.2" />
<line x1="5.5" y1="473.4" x2="76" y2="473.4" stroke="#7a7a7a" stroke-width="1.2" />
<rect x="5.2" y="254.500" width="33.400" height="32.800" fill="#5c6a8a" stroke="#7d8aa8" stroke-width="0.900"/><rect x="6.600" y="255.900" width="30.600" height="30" fill="none" stroke="#1c1e2a" stroke-width="1"/>
<circle cx="20" cy="121.200" r="7.600" fill="none" stroke="#c6c6c6" stroke-width="1.300"/><path d="M25.600,126.800l4.800,4.600" stroke="#c6c6c6" stroke-width="2.200" stroke-linecap="round"/>
<path d="M52.800,131c-1.200,-2.500 -3,-5.500 -4.600,-7.500c-0.500,-1.300 1,-2.200 2.100,-1.300l2.800,2.500l-0.800,-8.500c0,-1.500 1.900,-1.700 2.200,-0.200l1,5.800l0.300,-7c0,-1.500 2.100,-1.500 2.200,0l0.300,7l1.300,-6c0.400,-1.400 2.300,-1 2.100,0.400l-0.800,6.600l2.300,-4.200c0.800,-1.300 2.500,-0.400 2,0.900c-1.200,3.200 -2.500,7.500 -4.200,11.500z" fill="#c6c6c6"/>
<path d="M12.200,167.500L31.300,148.600" stroke="#c6c6c6" stroke-width="1.300"/>
<g fill="none" stroke="#c6c6c6" stroke-width="1.200" stroke-linejoin="round"><path d="M55.200,149.300l6.700,3.200v8.800l-6.700,3.200l-6.700,-3.200v-8.800z"/><path d="M48.500,152.500l6.700,3.200l6.700,-3.200M55.200,155.700v8.800" stroke-width="0.900"/></g><path d="M58.400,157.200l6.200,5.800l-3,0.300l1.700,3.700l-1.800,0.800l-1.700,-3.800l-1.900,2z" fill="#c6c6c6" stroke="#404040" stroke-width="0.600"/>
<path d="M12.200,203.800l1.500,-4.500l10.500,-11l3,3l-10.600,10.800z" fill="none" stroke="#c6c6c6" stroke-width="1.200" stroke-linejoin="round"/><path d="M22.800,187.200l5.600,5.400l1.200,-1.300l-1.500,-1.500l2.800,-3a2,2 0 0 0 -2.900,-2.900l-2.900,2.900l-1.300,-1.300z" fill="#c6c6c6"/><path d="M13.500,202.300l8,-8" stroke="#c6c6c6" stroke-width="0.800"/>
<rect x="49.600" y="185.600" width="16.200" height="17" rx="2" fill="none" stroke="#c6c6c6" stroke-width="1.300" stroke-dasharray="2.600 1.600"/>
<path d="M12.200,239.600L22.500,229.200" stroke="#c6c6c6" stroke-width="1.400"/><path d="M23.900,219.800l1.100,5.300l3.900,-3.300l-2.400,4.600l5.200,0.800l-5.100,1.500l3.300,3.800l-4.800,-2.100l-0.600,5.300l-1.900,-5l-4.400,2.600l3,-4.200l-5,-1.800l5.300,-0.900l-2.300,-4.600l4,3.200z" fill="#c6c6c6"/>
<path d="M57.600,219.600l3.600,4.600h-2.900v5h5v-2.900l4.600,3.600l-4.600,3.600v-2.900h-5v5h2.900l-3.600,4.600l-3.600,-4.600h2.900v-5h-5v2.900l-4.600,-3.600l4.600,-3.600v2.900h5v-5h-2.900z" fill="#c6c6c6"/>
<path d="M12.400,281c1.200,-6.500 4.300,-12.500 10.300,-16.500l6.300,6.200c-3.800,6 -9.800,9.200 -16.600,10.300z" fill="none" stroke="#d4d4d4" stroke-width="1.200" stroke-linejoin="round"/><path d="M22.300,264.200l3.700,-3.600l6.800,6.800l-3.600,3.600z" fill="#d4d4d4"/><path d="M13,280.400l9,-9.200" stroke="#d4d4d4" stroke-width="1.300"/>
<path d="M58.600,261.700l8.400,8.300l-9.500,9.500h-4.400l-4.800,-4.800z" fill="none" stroke="#c6c6c6" stroke-width="1.200" stroke-linejoin="round"/><path d="M58.600,261.700l8.400,8.300l-5.600,5.600l-8.400,-8.300z" fill="#c6c6c6"/><path d="M55,280.600h11" stroke="#c6c6c6" stroke-width="1.200"/>
<path d="M21.500,297.600l10.300,10.200l-8.700,8.700h-3.200l-7,-7z" fill="#c6c6c6"/><path d="M21.500,299.300l5.300,5.300h-10.600z" fill="#404040"/><path d="M16,303.800c-3.200,1.200 -4.300,4.500 -3,8.500l2.200,-1.500c-0.400,-2 0.200,-3.500 2,-4.500z" fill="#c6c6c6"/>
<g transform="translate(57.600 306.700) scale(0.900) translate(-57.600 -306.700)"><path d="M49.500,302.700l12.100,12.100M53,299.200l12.100,12.100M56.500,295.700l12.100,12.100M46.500,306.700l11,11M65.700,302.700l-12.100,12.100M62.200,299.200l-12.100,12.100M58.700,295.700l-12.100,12.100M68.700,306.700l-11,11" stroke="#c6c6c6" stroke-width="1.200" fill="none"/></g>
<path d="M12.300,351.700c1.300,-5.500 3.600,-10.500 7.600,-13c3.300,-1.300 5.800,1.300 5.300,4.500c-2,4.300 -7.300,6.800 -12.900,8.500z" fill="none" stroke="#c6c6c6" stroke-width="1.300" stroke-linejoin="round"/><path d="M12.300,351.700l1.700,-5.200c1.500,0.200 1.700,-1.400 2.800,-0.600c0.800,1 1.300,-1 2.400,0c0.800,1 1.800,-0.500 2.600,0.600c-2.800,2.500 -5.800,4 -9.500,5.200z" fill="#c6c6c6"/><path d="M20.500,338.200l5.700,-5l5,5l-5,5.600z" fill="#c6c6c6"/>
<path d="M53.400,351.400v-9c0,-3.600 3,-5.600 6.800,-5.600s6.800,2 6.800,5.600v9z" fill="#c6c6c6"/><rect x="55" y="346.600" width="10.600" height="2.900" fill="#404040"/><rect x="58.700" y="333" width="3" height="4.500" fill="#c6c6c6"/><rect x="56.200" y="335.200" width="3" height="1.300" fill="#c6c6c6"/>
<g fill="#c6c6c6"><circle cx="54.200" cy="336" r="0.700"/><circle cx="51.500" cy="333.500" r="0.800"/><circle cx="51.500" cy="336.300" r="0.800"/><circle cx="51.600" cy="339" r="0.800"/><circle cx="48.600" cy="332.300" r="0.900"/><circle cx="48.600" cy="335.400" r="0.900"/><circle cx="48.600" cy="338.600" r="0.900"/><circle cx="48.600" cy="342" r="0.900"/><circle cx="54" cy="339" r="0.700"/><circle cx="51.500" cy="341.500" r="0.800"/></g>
<path d="M12.300,387.700c2.500,-7 6,-13 10.500,-17.500l8.700,6.500c-5.500,5 -11.800,8.500 -19.200,11z" fill="none" stroke="#c6c6c6" stroke-width="1.300" stroke-linejoin="round"/><path d="M20.300,372.500l5.300,-4.300l6.200,6.200l-3.800,4.600c-1.300,1 -2.400,-0.800 -3.600,0.400c-0.900,-1.700 -2.300,-1.500 -2.400,-3.200c-1.600,-0.600 -1.200,-2.300 -1.700,-3.700z" fill="#c6c6c6"/>
<defs><linearGradient id="dropg" x1="0" x2="1"><stop offset="0" stop-color="#c8c8c8"/><stop offset="1" stop-color="#777"/></linearGradient></defs>
<path d="M53.200,369.700c3,4 5.600,7.500 5.600,11.200a5.600,5.900 0 0 1 -11.200,0c0,-3.700 2.600,-7.200 5.600,-11.200z" fill="url(#dropg)"/><path d="M62,369.700c3,4 5.600,7.500 5.600,11.200a5.600,5.900 0 0 1 -11.200,0c0,-3.700 2.600,-7.200 5.600,-11.200z" fill="url(#dropg)" stroke="#c4c4c4" stroke-width="0.500"/>
<rect x="14.500" y="405.400" width="14.600" height="17.300" rx="1.600" fill="none" stroke="#c6c6c6" stroke-width="1.300"/><path d="M11.800,416.600l19.600,-6.600v3l-19.600,6.600z" fill="#404040"/><path d="M12.100,415.400l19,-6.300M12.100,418.800l19,-6.300" stroke="#c6c6c6" stroke-width="1.100"/><path d="M14.500,406.300h14.600" stroke="#c6c6c6" stroke-width="1.800"/>
<g fill="none" stroke="#c6c6c6" stroke-width="1.100"><rect x="48.500" y="404.800" width="18.300" height="18.700" rx="3.600"/><path d="M54.200,404.800v18.700M48.500,411h18.300M48.500,417.800h18.300M58.300,404.800c5.500,3.500 7.500,9 1,18.700M66.800,416c-3,1.500 -5.500,4 -7.500,7.500"/></g>
<text x="21.7" y="459.6" font-size="27.2" fill="#c6c6c6" text-anchor="middle" stroke="#c6c6c6" stroke-width="0.500">A</text>
<defs><linearGradient id="grad1" x1="0" y1="1" x2="1" y2="0"><stop offset="0" stop-color="#d0d0d0"/><stop offset="1" stop-color="#4a4a4a"/></linearGradient></defs>
<rect x="13.400" y="485" width="16.600" height="16.600" rx="1.600" fill="url(#grad1)" stroke="#c6c6c6" stroke-width="1"/>
<circle cx="57.500" cy="493.300" r="9.300" fill="none" stroke="#c6c6c6" stroke-width="1.100"/>
<path d="M13,520h19l-19,18.600z M15.800,523.600v8.600l8.700,-8.600z" fill="#c6c6c6" fill-rule="evenodd"/>
<path d="M53.500,534.200c-3.300,-1 -5.300,-3.500 -5.300,-6.600c0,-4.200 4.200,-7.400 9.400,-7.400s9.400,3.200 9.400,7.400s-4.200,7.400 -9.400,7.400c-0.800,0 -1.500,-0.100 -2.200,-0.200l-5.800,2.800z" fill="none" stroke="#c6c6c6" stroke-width="1.100" stroke-linejoin="round"/>
<rect x="12" y="555" width="5" height="4.800" fill="#c6c6c6"/><path d="M17,557.400h13.200M14.500,559.800v13.600" stroke="#c6c6c6" stroke-width="1.200"/><path d="M18.500,561.300l12.500,5.100l-5.600,1.500l-2.400,5.500z" fill="#c6c6c6"/>
<rect x="2.200" y="585.200" width="22" height="30.800" rx="3.200" fill="#2a2a2a" stroke="#7f90cf" stroke-width="2.200"/>
<rect x="4.7" y="587.7" width="17" height="25.6" fill="#00a0b4" />
<rect x="28.500" y="584.900" width="23.300" height="31.300" rx="3.400" fill="#383838" stroke="#626262" stroke-width="1"/>
<rect x="32" y="587.7" width="16.2" height="25.6" fill="#ffffff" />
<rect x="55.700" y="584.900" width="23.300" height="31.300" rx="3.400" fill="#383838" stroke="#626262" stroke-width="1"/>
<defs><pattern id="chk6" x="59" y="587.700" width="11" height="11" patternUnits="userSpaceOnUse"><rect width="11" height="11" fill="#ffffff"/><rect x="5.500" width="5.500" height="5.500" fill="#777"/><rect y="5.500" width="5.500" height="5.500" fill="#777"/></pattern></defs>
<rect x="59" y="587.700" width="16.600" height="25.600" rx="2" fill="url(#chk6)"/>
<circle cx="40" cy="807.500" r="26.800" fill="#404040" stroke="#d2d2d2" stroke-width="1.500"/>
<g fill="none" stroke="#d2d2d2" stroke-width="2.500"><path d="M27.300,802V799a7.500,7.500 0 0 1 7.500,-7.500H45.600a7.500,7.500 0 0 1 7.500,7.500V802.500"/><path d="M53.100,813.500V816.500a7.500,7.500 0 0 1 -7.500,7.500H34.800a7.500,7.500 0 0 1 -7.500,-7.500V813"/></g>
<path d="M22.700,801.600H32L27.300,807.400Z M48.400,813.800H57.400L53.100,808.300Z" fill="#d2d2d2"/>
<rect x="33.300" y="797.500" width="13.500" height="20" rx="2.200" fill="#3a3a3a" stroke="#d2d2d2" stroke-width="1.600"/><path d="M34.300,798.500H45.800L34.300,816.500Z" fill="#d2d2d2"/>
<rect x="84.3" y="77.2" width="40" height="38.2" fill="#4c4c4c" />
<rect x="84.3" y="123" width="40" height="111" fill="#4c4c4c" />
<rect x="84.3" y="241.6" width="40" height="149.2" fill="#4c4c4c" />
<rect x="84.3" y="444" width="40" height="75" fill="#4c4c4c" />
<rect x="84.3" y="527" width="40" height="37.4" fill="#4c4c4c" />
<rect x="84.800" y="398" width="43" height="37.400" fill="#3a3a3a" stroke="#4e4e4e" stroke-width="1"/>
<rect x="88.4" y="403" width="39.6" height="29.4" fill="#4a4a4a" />
<path d="M104.1,416.4L112.1,421.4L104.1,426.4L96.1,421.4Z" fill="#4a4a4a" stroke="#cfcfcf" stroke-width="1.2" stroke-linejoin="round"/>
<path d="M104.1,412.2L112.1,417.2L104.1,422.2L96.1,417.2Z" fill="#4a4a4a" stroke="#cfcfcf" stroke-width="1.2" stroke-linejoin="round"/>
<path d="M104.1,408.0L112.1,413.0L104.1,418.0L96.1,413.0Z" fill="#4a4a4a" stroke="#cfcfcf" stroke-width="1.2" stroke-linejoin="round"/>
<circle cx="104" cy="96.600" r="8.500" fill="none" stroke="#767676" stroke-width="1.400"/><path d="M101,94l6.200,1l-1.700,1.700l7.700,7.700l-1.400,1.400l-7.700,-7.700l-1.900,1.900z" fill="#767676"/>
<path d="M94.800,150.600l1.400,-4.200l13.800,-13.800l2.900,2.900l-13.800,13.800z" fill="#767676"/><rect x="100.500" y="140" width="15.500" height="14.500" fill="#4c4c4c" opacity="0"/><g fill="none" stroke="#767676" stroke-width="1.200"><path d="M113,143.600h-6.500a1,1 0 0 0 -1,1v6.800a1,1 0 0 0 1,1h6.500M105.500,148h7.500"/></g><circle cx="114.300" cy="143.600" r="1.700" fill="#767676"/><circle cx="114.300" cy="148" r="1.700" fill="#767676"/><circle cx="114.300" cy="152.400" r="1.700" fill="#767676"/>
<path d="M94.500,175.500h19.500M94.500,182h19.500" stroke="#767676" stroke-width="1.200"/><circle cx="101.500" cy="175.500" r="2.300" fill="#767676"/><circle cx="108" cy="182" r="2.300" fill="#767676"/>
<path d="M99.500,209.500a6.600,6.600 0 1 0 3.500,12.200a4.800,4.800 0 0 0 8.700,-2.700a5.600,5.600 0 0 0 -7,-8.200a6.600,6.600 0 0 0 -5.200,-1.300z" fill="none" stroke="#767676" stroke-width="1.200"/><path d="M98.500,215.800h9.500" stroke="#767676" stroke-width="1.500"/><path d="M95.300,215.800l4,-3v6z M111.300,215.800l-4,-3v6z" fill="#767676"/><path d="M113.300,212.500v6.600" stroke="#767676" stroke-width="1.100"/>
<defs><linearGradient id="gsq" x1="0" y1="0" x2="1" y2="1"><stop offset="0" stop-color="#8a8a8a"/><stop offset="1" stop-color="#444"/></linearGradient></defs>
<circle cx="104" cy="261" r="9.300" fill="none" stroke="#767676" stroke-width="1.300"/><rect x="99.500" y="256.500" width="9.500" height="9.500" rx="1" fill="url(#gsq)" stroke="#767676" stroke-width="0.800"/>
<defs><linearGradient id="dropg2" x1="0" x2="1"><stop offset="0" stop-color="#7c7c7c"/><stop offset="1" stop-color="#555"/></linearGradient></defs>
<path d="M99.500,289c3.300,4.300 6,8 6,11.800a6,6.200 0 0 1 -12,0c0,-3.800 2.700,-7.500 6,-11.800z" fill="url(#dropg2)"/><path d="M108.800,289c3.300,4.300 6,8 6,11.800a6,6.200 0 0 1 -12,0c0,-3.800 2.700,-7.500 6,-11.800z" fill="url(#dropg2)"/>
<rect x="95.500" y="326.500" width="17.400" height="17.400" rx="2" fill="#6a6a6a" stroke="#767676" stroke-width="0.800"/><g fill="#5a5a5a"><rect x="97" y="328" width="4.300" height="4.300"/><rect x="107" y="328" width="4.300" height="4.300"/><rect x="102" y="338" width="4.300" height="4.300"/></g><g fill="#868686"><rect x="102" y="328" width="4.300" height="4.300"/><rect x="97" y="333" width="4.300" height="4.300"/><rect x="107" y="338" width="4.300" height="4.300"/></g><rect x="102.600" y="333.600" width="3" height="3" fill="none" stroke="#bbb" stroke-width="0.700"/>
<rect x="95.500" y="363" width="17.400" height="17.400" rx="1.500" fill="#6a6a6a"/><rect x="99" y="364.500" width="10.400" height="6.400" fill="#7c7c7c"/><rect x="99" y="372.500" width="10.400" height="6.400" fill="#7c7c7c"/><g fill="#4c4c4c"><rect x="96.500" y="365" width="1.600" height="2"/><rect x="96.500" y="369" width="1.600" height="2"/><rect x="96.500" y="373" width="1.600" height="2"/><rect x="96.500" y="377" width="1.600" height="2"/><rect x="110.300" y="365" width="1.600" height="2"/><rect x="110.300" y="369" width="1.600" height="2"/><rect x="110.300" y="373" width="1.600" height="2"/><rect x="110.300" y="377" width="1.600" height="2"/></g>
<g fill="none" stroke="#767676" stroke-width="1.100" stroke-linejoin="round"><path d="M103,455l6.500,3.400l-6.500,3.400l-6.500,-3.400z"/><path d="M96.500,462l6.500,3.400"/><path d="M96.500,465.600l6.500,3.400"/><circle cx="110.500" cy="463" r="1.300"/><rect x="108.500" y="467" width="3" height="3"/><path d="M104,467l2.500,3M106.500,467l-2.500,3"/></g>
<rect x="96" y="492" width="17" height="16" rx="2" fill="none" stroke="#767676" stroke-width="1.200"/><rect x="99" y="495.500" width="5" height="3.600" fill="#767676"/><rect x="99" y="500.800" width="11" height="3.600" fill="#767676"/>
<path d="M96,538.500h5l1.500,1.800h10.500v13.500h-17z" fill="none" stroke="#767676" stroke-width="1.200"/><path d="M96,538h5l1,1.500h-6z" fill="#767676"/><path d="M104.500,542.300l1.300,3h3.200l-2.600,2l1,3.200l-2.900,-1.900l-2.900,1.900l1,-3.200l-2.600,-2h3.200z" fill="#767676"/>
<path d="M168,93.10000000000001L175,97.4L168,101.7L161,97.4Z" fill="#4a4a4a" stroke="#dadada" stroke-width="1.2" stroke-linejoin="round"/>
<path d="M168,89.10000000000001L175,93.4L168,97.7L161,93.4Z" fill="#4a4a4a" stroke="#dadada" stroke-width="1.2" stroke-linejoin="round"/>
<path d="M168,85.10000000000001L175,89.4L168,93.7L161,89.4Z" fill="#4a4a4a" stroke="#dadada" stroke-width="1.2" stroke-linejoin="round"/>
<path d="M24.6,36.0 C25.1,35.8 26.5,34.9 27.5,34.6 C28.5,34.3 29.7,34.1 30.6,34.3 C31.5,34.5 32.9,35.0 33.0,35.6 C33.1,36.2 32.3,37.4 31.2,38.0 C30.1,38.6 27.9,39.3 26.4,39.4 C24.9,39.5 22.9,39.1 22.0,38.5 C21.1,37.9 20.8,37.0 21.3,36.0 C21.8,35.0 23.2,33.4 24.8,32.6 C26.4,31.8 28.8,31.3 30.6,31.4 C32.4,31.5 34.5,32.4 35.6,33.4 C36.7,34.4 37.3,36.3 37.0,37.6 C36.7,38.9 35.4,40.3 34.0,41.3 C32.6,42.3 29.2,42.8 28.6,43.8 C28.0,44.8 30.1,46.5 30.4,47.0" fill="none" stroke="#cacaca" stroke-width="3.300" stroke-linecap="round" stroke-linejoin="round"/>
<text x="61.2" y="44" font-size="13" fill="#e8e8e8" text-anchor="start" textLength="54.5" lengthAdjust="spacingAndGlyphs">ファイル</text>
<text x="132" y="44" font-size="13" fill="#e8e8e8" text-anchor="start" textLength="27.5" lengthAdjust="spacingAndGlyphs">編集</text>
<text x="175.7" y="44" font-size="13" fill="#e8e8e8" text-anchor="start" textLength="67.3" lengthAdjust="spacingAndGlyphs">ページ管理</text>
<text x="259.5" y="44" font-size="13" fill="#e8e8e8" text-anchor="start" textLength="93.5" lengthAdjust="spacingAndGlyphs">アニメーション</text>
<text x="370.5" y="44" font-size="13" fill="#e8e8e8" text-anchor="start" textLength="54.5" lengthAdjust="spacingAndGlyphs">レイヤー</text>
<text x="441" y="44" font-size="13" fill="#e8e8e8" text-anchor="start" textLength="54" lengthAdjust="spacingAndGlyphs">選択範囲</text>
<text x="512.3" y="44" font-size="13" fill="#e8e8e8" text-anchor="start" textLength="27.2" lengthAdjust="spacingAndGlyphs">表示</text>
<text x="555" y="44" font-size="13" fill="#e8e8e8" text-anchor="start" textLength="68" lengthAdjust="spacingAndGlyphs">フィルター</text>
<text x="639.5" y="44" font-size="13" fill="#e8e8e8" text-anchor="start" textLength="67.5" lengthAdjust="spacingAndGlyphs">ウィンドウ</text>
<text x="723.3" y="44" font-size="13" fill="#e8e8e8" text-anchor="start" textLength="41" lengthAdjust="spacingAndGlyphs">ヘルプ</text>
<rect x="397.5" y="52.5" width="882.5" height="35.3" fill="#4a4a4a" />
<line x1="397.5" y1="52.6" x2="1280" y2="52.6" stroke="#3a3a3a" stroke-width="1" />
<rect x="467.500" y="53.200" width="34.300" height="32.400" rx="2.500" fill="#5c6a8a"/>
<rect x="1040" y="53.200" width="70" height="32.400" rx="2.500" fill="#5c6a8a"/>
<line x1="563.3" y1="54.5" x2="563.3" y2="86" stroke="#626262" stroke-width="1.5" />
<line x1="698.3" y1="54.5" x2="698.3" y2="86" stroke="#626262" stroke-width="1.5" />
<line x1="776" y1="54.5" x2="776" y2="86" stroke="#626262" stroke-width="1.5" />
<line x1="924" y1="54.5" x2="924" y2="86" stroke="#626262" stroke-width="1.5" />
<line x1="1036" y1="54.5" x2="1036" y2="86" stroke="#626262" stroke-width="1.5" />
<line x1="1149.5" y1="54.5" x2="1149.5" y2="86" stroke="#626262" stroke-width="1.5" />
<line x1="1192.5" y1="54.5" x2="1192.5" y2="86" stroke="#626262" stroke-width="1.5" />
<path d="M408,64.200h15.200M408,69.600h15.200M408,75h15.200" stroke="#c6c6c6" stroke-width="2.200"/>
<rect x="442" y="61.300" width="16.600" height="16.300" rx="1.500" fill="none" stroke="#c6c6c6" stroke-width="1.200"/><path d="M445.500,74.200l9.500,-9.500M450.800,64.400h4.500v4.500M449.800,74.500h-4.500v-4.500" fill="none" stroke="#c6c6c6" stroke-width="1.200"/>
<rect x="475" y="65" width="14.500" height="13" rx="1.500" fill="none" stroke="#c6c6c6" stroke-width="1.200"/><path d="M483.500,70.500l3.300,-6.800c0.800,-1.600 2.300,-2.300 4,-2.300h3.800v6l-3.500,2.500l-2.800,3z" fill="#c6c6c6" stroke="#5c6a8a" stroke-width="0.700"/><path d="M486.500,69c-2,3.500 -4.500,6 -7.500,5.500c-1.700,-0.800 -1.500,-3 0.500,-3.800" fill="none" stroke="#c6c6c6" stroke-width="1.100"/>
<path d="M508.4,66.3l4.600,-4.300l4.600,4.300M508.4,73.7l4.600,4.300l4.600,-4.300" fill="none" stroke="#c6c6c6" stroke-width="1.200"/>
<rect x="532" y="61.300" width="19" height="17.200" rx="1.500" fill="none" stroke="#c6c6c6" stroke-width="1.200"/>
<g transform="rotate(-18 541.500 70.500)"><path d="M541.500,71.300c-0.800,-1.600 1.800,-2.700 3,-1.200c1.300,1.800 -0.700,4 -3.500,3.600c-3.200,-0.500 -4.400,-4 -2.400,-6c2.300,-2.300 7,-2.200 9,0.500c1.800,2.500 1,5.500 -1.500,7" fill="none" stroke="#c6c6c6" stroke-width="1.500" stroke-linecap="round"/></g><circle cx="548" cy="62.500" r="2.700" fill="#ff3b30"/>
<path d="M578.500,61.300h11.500a1.500,1.500 0 0 1 1.500,1.500v9.500M588,77.500h-5.500l-4.500,-4.500v-10.200a1.500,1.500 0 0 1 1.500,-1.500" fill="none" stroke="#c6c6c6" stroke-width="1.300"/><path d="M578,72.500l4.500,5v-5z" fill="#c6c6c6"/><circle cx="592.500" cy="76.800" r="4.300" fill="#4a4a4a" stroke="#c6c6c6" stroke-width="1.200"/><path d="M590,76.800h5M592.500,74.300v5" stroke="#c6c6c6" stroke-width="1.200"/>
<path d="M611,77.500v-13.500h6l1.500,2h7v3h-10.500l-3.500,8.500z" fill="#c6c6c6"/><path d="M612.500,77.500l3.300,-7.500h14.200l-3.300,7.500z" fill="#c6c6c6"/><path d="M622,64.500c1.500,-2.200 3.500,-2.700 6,-2.500" fill="none" stroke="#c6c6c6" stroke-width="1.200"/><path d="M627,60l3.300,2.300l-3.300,2.300z" fill="#c6c6c6"/>
<path d="M644.500,74.500l3.300,-7h3M664.500,74.500l-3.300,-7h-3" fill="none" stroke="#c6c6c6" stroke-width="1.200"/><rect x="644.500" y="74.300" width="20" height="4" rx="1" fill="#c6c6c6"/><path d="M654.500,60.500v8.500M650.800,65.800l3.700,3.700l3.700,-3.700" fill="none" stroke="#c6c6c6" stroke-width="1.300"/><path d="M647,72.800h15" stroke="#c6c6c6" stroke-width="1"/>
<path d="M677.9,66.3l4.600,-4.300l4.600,4.300M677.9,73.7l4.600,4.300l4.600,-4.300" fill="none" stroke="#c6c6c6" stroke-width="1.200"/>
<path d="M716.500,65.700h5.500a5.600,5.600 0 0 1 0,11.200h-9.500" fill="none" stroke="#c6c6c6" stroke-width="1.500"/><path d="M711,65.700l6.500,-5v10z" fill="#c6c6c6"/>
<path d="M756.500,65.700h-5.500a5.600,5.600 0 0 0 0,11.200h9.500" fill="none" stroke="#6e6e6e" stroke-width="1.500"/><path d="M762,65.700l-6.500,-5v10z" fill="#6e6e6e"/>
<path d="M801.80,69.50L806.30,69.50M801.16,71.90L805.05,74.15M799.40,73.66L801.65,77.55M797.00,74.30L797.00,78.80M794.60,73.66L792.35,77.55M792.84,71.90L788.95,74.15M792.20,69.50L787.70,69.50M792.84,67.10L788.95,64.85M794.60,65.34L792.35,61.45M797.00,64.70L797.00,60.20M799.40,65.34L801.65,61.45M801.16,67.10L805.05,64.85" stroke="#c6c6c6" stroke-width="1.400" fill="none"/>
<rect x="824" y="62.500" width="13" height="13" fill="#5a5a5a" stroke="#6e6e6e" stroke-width="1" stroke-dasharray="2 1.300"/><path d="M839.500,64l2,-1M839.500,69h2.500M839.500,74l2,1M831,77.500v2.500M826,77.500l-1,2M836,77.500l1,2" stroke="#6e6e6e" stroke-width="1"/>
<path d="M867.300,59.800l9.700,9.700l-8,8h-3.400l-6.600,-6.600z" fill="#c6c6c6"/><path d="M867.300,61.700l5.200,5.200h-10.400z" fill="#4a4a4a"/><path d="M862,66.300c-3.400,1 -4.800,4.300 -3.400,8l2.300,-1.500c-0.400,-1.900 0.300,-3.300 2,-4.300z" fill="#c6c6c6"/>
<rect x="895" y="63.500" width="12.500" height="12.500" fill="none" stroke="#c6c6c6" stroke-width="1.200"/><g fill="#c6c6c6"><rect x="893.500" y="62" width="3" height="3"/><rect x="906" y="62" width="3" height="3"/><rect x="893.500" y="74.500" width="3" height="3"/><rect x="906" y="74.500" width="3" height="3"/><circle cx="901.300" cy="76" r="1.400"/><circle cx="895" cy="69.700" r="1.400"/><circle cx="907.500" cy="69.700" r="1.400"/><circle cx="901.300" cy="59.700" r="1.400"/></g><path d="M901.300,60v3.500" stroke="#c6c6c6" stroke-width="1"/>
<rect x="937.500" y="62" width="15" height="15" fill="none" stroke="#6e6e6e" stroke-width="1" stroke-dasharray="2 1.300"/><path d="M937.500,62l15,15" stroke="#6e6e6e" stroke-width="1"/>
<rect x="972" y="62" width="15" height="15" fill="none" stroke="#6e6e6e" stroke-width="1" stroke-dasharray="2 1.300"/><path d="M987,62v15h-15z" fill="#6e6e6e"/>
<rect x="1006" y="61.500" width="16.500" height="16.500" rx="2" fill="none" stroke="#6e6e6e" stroke-width="1"/><rect x="1008.500" y="64" width="11.500" height="11.500" fill="#585858" stroke="#6e6e6e" stroke-width="0.900" stroke-dasharray="1.600 1.200"/>
<path d="M1050,61.500v15.500h15.500z" fill="none" stroke="#c6c6c6" stroke-width="1.200" stroke-linejoin="round"/><path d="M1056.500,70.500l7.500,-8.500l1.800,1.700l-7.800,8z" fill="#c6c6c6"/>
<path d="M1083,69.500c0,4.300 3.700,7.800 8.500,7.800s8.500,-3.500 8.500,-7.800" fill="none" stroke="#c6c6c6" stroke-width="1.200"/><path d="M1083,69.500c2.500,1.600 9,2.500 17,0" fill="none" stroke="#c6c6c6" stroke-width="1"/><path d="M1090.500,70l8,-9l1.800,1.700l-8.300,8.500z" fill="#c6c6c6"/>
<path d="M1121.500,64.500v12h13M1118,69.500h12.500M1130.500,69.500v10" fill="none" stroke="#a0a0a0" stroke-width="1.100"/><path d="M1126,68.500l7.500,-8l1.800,1.700l-7.800,7.500z" fill="#c6c6c6"/>
<rect x="1162.500" y="59.500" width="15" height="20" rx="1.800" fill="none" stroke="#c6c6c6" stroke-width="1.300"/><path d="M1162.500,75.500h15" stroke="#c6c6c6" stroke-width="1.600"/><g fill="#c6c6c6"><rect x="1165" y="62" width="2.200" height="2.200"/><rect x="1168.600" y="62" width="2.200" height="2.200"/><rect x="1172.200" y="62" width="2.200" height="2.200"/><rect x="1165" y="65.600" width="2.200" height="2.200"/><rect x="1168.600" y="65.600" width="2.200" height="2.200"/><rect x="1165" y="69.200" width="2.200" height="2.200"/></g>
<path d="M1217.600,62.300A8.300,8.300 0 1 0 1221.900,68.400" fill="none" stroke="#c6c6c6" stroke-width="1.300"/><path d="M1207.600,75.300l-2.300,3.800l5,-1.800" fill="none" stroke="#c6c6c6" stroke-width="1.200" stroke-linejoin="round"/><path d="M1218.800,64.700l4.800,-4.500M1220.200,59.900h3.600v3.600" fill="none" stroke="#c6c6c6" stroke-width="1.200"/>
<text x="1213.7" y="74.4" font-size="13" fill="#c6c6c6" text-anchor="middle" font-weight="bold">?</text>
<rect x="113.400" y="177.300" width="308" height="114.800" rx="30" ry="30" fill="none" stroke="#c6017e" stroke-width="8.400" stroke-linecap="round" stroke-dasharray="8 12.200" stroke-dashoffset="5"/>
</svg>
</body></html>
